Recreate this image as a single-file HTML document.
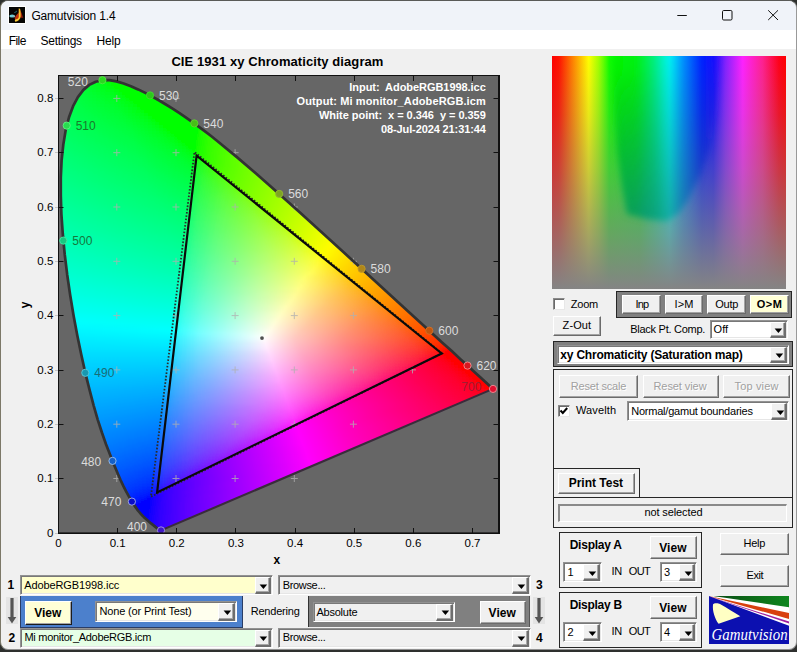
<!DOCTYPE html><html><head><meta charset="utf-8"><title>Gamutvision 1.4</title><style>
html,body{margin:0;padding:0}
body{width:797px;height:652px;background:#2e302e;position:relative;overflow:hidden;font-family:"Liberation Sans",Arial,sans-serif;font-size:11px}
#win{position:absolute;left:0;top:0;width:795px;height:648px;border:1px solid;border-color:#5a5a58 #999 #8f8f8f #7c7868;border-radius:8px;background:#f0f0f0;overflow:hidden}
#win div,#win span.t,#win svg{position:absolute}
span.t{white-space:nowrap;display:block}
.btn{border-top:1px solid #fff;border-left:1px solid #fff;border-right:1px solid #6b6b6b;border-bottom:1px solid #6b6b6b;box-shadow:inset -1px -1px 0 #a3a3a3}
.dd{border:1px solid;border-color:#929292 #fff #fff #929292;box-shadow:inset 1px 1px 0 #787878, inset -1px -1px 0 #e6e6e6}
.ab{background:#f0f0f0;border-style:solid;border-width:1px 2px 2px 1px;border-color:#fff #6e6e6e #6e6e6e #fff;box-shadow:inset -1px -1px 0 #a6a6a6}
.frame{border:1px solid #262626;box-sizing:border-box}
.dk{border-right-color:#1c1c1c;border-bottom-color:#1c1c1c}
.dis span.t{text-shadow:1px 1px 0 #fff}
.sunk{border-style:solid;border-width:2px 1px 1px 2px;border-color:#8a8a8a #fff #fff #8a8a8a;box-sizing:border-box}
.cb{background:#fff;border:1px solid;border-color:#8a8a8a #e8e8e8 #e8e8e8 #8a8a8a;box-shadow:inset 1px 1px 0 #6a6a6a;box-sizing:border-box}
</style></head><body><div id="win">
<div style="left:0px;top:0px;width:795px;height:29px;background:#f0f3f9;"></div>
<div style="left:0px;top:29px;width:795px;height:19px;background:#fff;"></div>
<svg style="left:7px;top:5px" width="18" height="18" viewBox="-1 -1 18 18"><rect x="-1" y="-1" width="18" height="18" fill="#fff"/><rect width="16" height="16" fill="#050505"/><ellipse cx="3.1" cy="8.9" rx="2.8" ry="1.5" fill="#6cccd6"/><ellipse cx="5.3" cy="9.4" rx="1" ry=".9" fill="#a9a4aa"/><path d="M4.8 5.7 L6.6 4.6 L8 3.4 L7.7 5 L5.6 6 Z" fill="#1f6872"/><path d="M5.6 11.8 L7 8.6 L9.8 5.5 L10 12 L7 12.8 Z" fill="#c2300c"/><path d="M11.3 2.6 L12.6 6 L14.4 11.2 L13 10.4 L11.6 11.8 Z" fill="#86140a"/><path d="M11.4 3 L12.2 6.5 L12.4 9.6 L11.5 10.5 Z" fill="#d8480e"/><path d="M9.7 1.4 L11.1 1.7 C11.8 5 11.9 8 11.6 10 C11 12.6 9 14.6 6.4 14.8 C5.5 14 5.8 12.6 6.4 12.2 C8 12.6 9.3 11.6 9.7 10 Z" fill="#f5b92a"/><path d="M10.3 4 C10.8 6.5 10.9 8.5 10.6 10 C10.2 11.8 8.6 13.6 6.6 13.9 C6.3 13.4 6.5 13 6.9 12.9 C8.6 12.9 9.9 11.8 10.2 10 Z" fill="#fde04a"/></svg>
<span class="t" style="left:30.4px;top:6.6px;font-size:12px;line-height:16px;letter-spacing:-0.181px;color:#000;">Gamutvision 1.4</span>
<svg style="left:669px;top:4px" width="120" height="20" viewBox="0 0 120 20" fill="none" stroke="#111" stroke-width="1"><path d="M7.3 10.5 H16.8"/><rect x="52.5" y="5.5" width="9.5" height="9.5" rx="1.2"/><path d="M98.2 5.3 L108 15 M108 5.3 L98.2 15"/></svg>
<span class="t" style="left:7.8px;top:31.8px;font-size:12px;line-height:16px;letter-spacing:-0.584px;color:#000;">File</span>
<span class="t" style="left:39.6px;top:31.8px;font-size:12px;line-height:16px;letter-spacing:-0.270px;color:#000;">Settings</span>
<span class="t" style="left:95.6px;top:31.8px;font-size:12px;line-height:16px;letter-spacing:-0.220px;color:#000;">Help</span>
<span class="t" style="left:170.4px;top:52px;font-size:13px;line-height:17px;letter-spacing:0.080px;color:#000;font-weight:bold;">CIE 1931 xy Chromaticity diagram</span>
<span class="t" style="left:272.6px;top:552px;font-size:12px;line-height:14px;font-weight:bold">x</span>
<span class="t" style="left:19.5px;top:297px;font-size:12px;line-height:14px;font-weight:bold;transform:rotate(-90deg);transform-origin:center;width:8px;text-align:center">y</span>
<span class="t" style="left:54.302px;top:535.05px;font-size:11.5px;line-height:15.5px;letter-spacing:-0.000px;color:#000;">0</span>
<span class="t" style="left:108.647px;top:535.05px;font-size:11.5px;line-height:15.5px;letter-spacing:0.000px;color:#000;">0.1</span>
<span class="t" style="left:167.787px;top:535.05px;font-size:11.5px;line-height:15.5px;letter-spacing:-0.000px;color:#000;">0.2</span>
<span class="t" style="left:226.927px;top:535.05px;font-size:11.5px;line-height:15.5px;letter-spacing:-0.000px;color:#000;">0.3</span>
<span class="t" style="left:286.067px;top:535.05px;font-size:11.5px;line-height:15.5px;letter-spacing:-0.000px;color:#000;">0.4</span>
<span class="t" style="left:345.207px;top:535.05px;font-size:11.5px;line-height:15.5px;letter-spacing:-0.000px;color:#000;">0.5</span>
<span class="t" style="left:404.347px;top:535.05px;font-size:11.5px;line-height:15.5px;letter-spacing:-0.000px;color:#000;">0.6</span>
<span class="t" style="left:463.487px;top:535.05px;font-size:11.5px;line-height:15.5px;letter-spacing:-0.000px;color:#000;">0.7</span>
<span class="t" style="left:45.904px;top:524.55px;font-size:11.5px;line-height:15.5px;letter-spacing:-0.000px;color:#000;">0</span>
<div style="left:53.5px;top:531.5px;width:3.5px;height:1px;background:#c4c4c4;"></div>
<span class="t" style="left:36.3132px;top:470.25px;font-size:11.5px;line-height:15.5px;letter-spacing:-0.000px;color:#000;">0.1</span>
<div style="left:53.5px;top:477.2px;width:3.5px;height:1px;background:#c4c4c4;"></div>
<span class="t" style="left:36.3132px;top:415.95px;font-size:11.5px;line-height:15.5px;letter-spacing:-0.000px;color:#000;">0.2</span>
<div style="left:53.5px;top:422.9px;width:3.5px;height:1px;background:#c4c4c4;"></div>
<span class="t" style="left:36.3132px;top:361.65px;font-size:11.5px;line-height:15.5px;letter-spacing:-0.000px;color:#000;">0.3</span>
<div style="left:53.5px;top:368.6px;width:3.5px;height:1px;background:#c4c4c4;"></div>
<span class="t" style="left:36.3132px;top:307.35px;font-size:11.5px;line-height:15.5px;letter-spacing:-0.000px;color:#000;">0.4</span>
<div style="left:53.5px;top:314.3px;width:3.5px;height:1px;background:#c4c4c4;"></div>
<span class="t" style="left:36.3132px;top:253.05px;font-size:11.5px;line-height:15.5px;letter-spacing:-0.000px;color:#000;">0.5</span>
<div style="left:53.5px;top:260px;width:3.5px;height:1px;background:#c4c4c4;"></div>
<span class="t" style="left:36.3132px;top:198.75px;font-size:11.5px;line-height:15.5px;letter-spacing:-0.000px;color:#000;">0.6</span>
<div style="left:53.5px;top:205.7px;width:3.5px;height:1px;background:#c4c4c4;"></div>
<span class="t" style="left:36.3132px;top:144.45px;font-size:11.5px;line-height:15.5px;letter-spacing:-0.000px;color:#000;">0.7</span>
<div style="left:53.5px;top:151.4px;width:3.5px;height:1px;background:#c4c4c4;"></div>
<span class="t" style="left:36.3132px;top:90.15px;font-size:11.5px;line-height:15.5px;letter-spacing:-0.000px;color:#000;">0.8</span>
<div style="left:53.5px;top:97.1px;width:3.5px;height:1px;background:#c4c4c4;"></div>
<svg style="left:57px;top:74px" width="442" height="459" viewBox="58 75 442 459"><defs><linearGradient id="g0" gradientUnits="userSpaceOnUse" x1="91.7" x2="123.3" y1="0" y2="0"><stop offset="0" stop-color="#00ff23"/><stop offset="0.437" stop-color="#00ff0d"/><stop offset="0.531" stop-color="#0f0"/><stop offset="1" stop-color="#0f0"/></linearGradient><linearGradient id="g1" gradientUnits="userSpaceOnUse" x1="86.6" x2="131.7" y1="0" y2="0"><stop offset="0" stop-color="#00ff2d"/><stop offset="0.435" stop-color="#00ff14"/><stop offset="0.543" stop-color="#00ff06"/><stop offset="0.609" stop-color="#0f0"/><stop offset="1" stop-color="#0f0"/></linearGradient><linearGradient id="g2" gradientUnits="userSpaceOnUse" x1="83.0" x2="138.6" y1="0" y2="0"><stop offset="0" stop-color="#0f3"/><stop offset="0.446" stop-color="#00ff18"/><stop offset="0.571" stop-color="#00ff06"/><stop offset="0.625" stop-color="#0f0"/><stop offset="1" stop-color="#0f0"/></linearGradient><linearGradient id="g3" gradientUnits="userSpaceOnUse" x1="80.3" x2="144.9" y1="0" y2="0"><stop offset="0" stop-color="#00ff38"/><stop offset="0.446" stop-color="#00ff1c"/><stop offset="0.585" stop-color="#00ff08"/><stop offset="0.631" stop-color="#0f0"/><stop offset="1" stop-color="#0f0"/></linearGradient><linearGradient id="g4" gradientUnits="userSpaceOnUse" x1="78.0" x2="150.7" y1="0" y2="0"><stop offset="0" stop-color="#00ff3d"/><stop offset="0.452" stop-color="#00ff1f"/><stop offset="0.589" stop-color="#00ff0c"/><stop offset="0.63" stop-color="#0f0"/><stop offset="1" stop-color="#0f0"/></linearGradient><linearGradient id="g5" gradientUnits="userSpaceOnUse" x1="75.9" x2="156.2" y1="0" y2="0"><stop offset="0" stop-color="#00ff41"/><stop offset="0.444" stop-color="#00ff23"/><stop offset="0.593" stop-color="#00ff0f"/><stop offset="0.63" stop-color="#0f0"/><stop offset="1" stop-color="#0f0"/></linearGradient><linearGradient id="g6" gradientUnits="userSpaceOnUse" x1="74.4" x2="161.6" y1="0" y2="0"><stop offset="0" stop-color="#00ff45"/><stop offset="0.443" stop-color="#00ff26"/><stop offset="0.602" stop-color="#00ff10"/><stop offset="0.648" stop-color="#0f0"/><stop offset="1" stop-color="#0f0"/></linearGradient><linearGradient id="g7" gradientUnits="userSpaceOnUse" x1="72.8" x2="166.6" y1="0" y2="0"><stop offset="0" stop-color="#00ff48"/><stop offset="0.447" stop-color="#00ff28"/><stop offset="0.606" stop-color="#00ff12"/><stop offset="0.638" stop-color="#00ff09"/><stop offset="0.67" stop-color="#0f0"/><stop offset="1" stop-color="#0f0"/></linearGradient><linearGradient id="g8" gradientUnits="userSpaceOnUse" x1="71.3" x2="171.5" y1="0" y2="0"><stop offset="0" stop-color="#00ff4b"/><stop offset="0.446" stop-color="#00ff2b"/><stop offset="0.614" stop-color="#00ff13"/><stop offset="0.653" stop-color="#00ff07"/><stop offset="0.683" stop-color="#0f0"/><stop offset="1" stop-color="#0f0"/></linearGradient><linearGradient id="g9" gradientUnits="userSpaceOnUse" x1="70.2" x2="176.2" y1="0" y2="0"><stop offset="0" stop-color="#00ff4e"/><stop offset="0.439" stop-color="#00ff2e"/><stop offset="0.617" stop-color="#00ff15"/><stop offset="0.664" stop-color="#00ff06"/><stop offset="0.692" stop-color="#0f0"/><stop offset="1" stop-color="#0f0"/></linearGradient><linearGradient id="g10" gradientUnits="userSpaceOnUse" x1="69.1" x2="180.8" y1="0" y2="0"><stop offset="0" stop-color="#00ff51"/><stop offset="0.446" stop-color="#00ff30"/><stop offset="0.625" stop-color="#00ff16"/><stop offset="0.67" stop-color="#00ff08"/><stop offset="0.696" stop-color="#0f0"/><stop offset="1" stop-color="#0f0"/></linearGradient><linearGradient id="g11" gradientUnits="userSpaceOnUse" x1="68.0" x2="185.3" y1="0" y2="0"><stop offset="0" stop-color="#00ff54"/><stop offset="0.441" stop-color="#0f3"/><stop offset="0.627" stop-color="#00ff18"/><stop offset="0.678" stop-color="#00ff09"/><stop offset="0.703" stop-color="#0f0"/><stop offset="1" stop-color="#0f0"/></linearGradient><linearGradient id="g12" gradientUnits="userSpaceOnUse" x1="67.1" x2="189.6" y1="0" y2="0"><stop offset="0" stop-color="#00ff57"/><stop offset="0.439" stop-color="#00ff35"/><stop offset="0.634" stop-color="#00ff19"/><stop offset="0.683" stop-color="#00ff0b"/><stop offset="0.707" stop-color="#0f0"/><stop offset="1" stop-color="#0f0"/></linearGradient><linearGradient id="g13" gradientUnits="userSpaceOnUse" x1="66.3" x2="193.8" y1="0" y2="0"><stop offset="0" stop-color="#00ff5a"/><stop offset="0.437" stop-color="#00ff38"/><stop offset="0.633" stop-color="#00ff1c"/><stop offset="0.695" stop-color="#00ff08"/><stop offset="0.719" stop-color="#0f0"/><stop offset="1" stop-color="#0f0"/></linearGradient><linearGradient id="g14" gradientUnits="userSpaceOnUse" x1="65.5" x2="197.9" y1="0" y2="0"><stop offset="0" stop-color="#00ff5d"/><stop offset="0.444" stop-color="#00ff39"/><stop offset="0.639" stop-color="#00ff1d"/><stop offset="0.699" stop-color="#00ff0b"/><stop offset="0.722" stop-color="#0f0"/><stop offset="1" stop-color="#0f0"/></linearGradient><linearGradient id="g15" gradientUnits="userSpaceOnUse" x1="64.8" x2="202.0" y1="0" y2="0"><stop offset="0" stop-color="#00ff5f"/><stop offset="0.442" stop-color="#00ff3c"/><stop offset="0.645" stop-color="#00ff1e"/><stop offset="0.703" stop-color="#00ff0d"/><stop offset="0.725" stop-color="#0f0"/><stop offset="0.964" stop-color="#0f0"/><stop offset="0.993" stop-color="#17ff00"/><stop offset="1" stop-color="#1aff00"/></linearGradient><linearGradient id="g16" gradientUnits="userSpaceOnUse" x1="64.1" x2="206.0" y1="0" y2="0"><stop offset="0" stop-color="#00ff62"/><stop offset="0.437" stop-color="#00ff3f"/><stop offset="0.641" stop-color="#00ff21"/><stop offset="0.711" stop-color="#00ff0d"/><stop offset="0.732" stop-color="#0f0"/><stop offset="0.937" stop-color="#0f0"/><stop offset="0.958" stop-color="#14ff00"/><stop offset="1" stop-color="#27ff00"/></linearGradient><linearGradient id="g17" gradientUnits="userSpaceOnUse" x1="63.6" x2="209.9" y1="0" y2="0"><stop offset="0" stop-color="#00ff64"/><stop offset="0.442" stop-color="#00ff40"/><stop offset="0.646" stop-color="#0f2"/><stop offset="0.714" stop-color="#00ff0f"/><stop offset="0.735" stop-color="#0f0"/><stop offset="0.912" stop-color="#0f0"/><stop offset="0.932" stop-color="#16ff00"/><stop offset="1" stop-color="#31ff00"/></linearGradient><linearGradient id="g18" gradientUnits="userSpaceOnUse" x1="63.0" x2="213.8" y1="0" y2="0"><stop offset="0" stop-color="#0f6"/><stop offset="0.437" stop-color="#00ff43"/><stop offset="0.649" stop-color="#00ff24"/><stop offset="0.722" stop-color="#00ff0f"/><stop offset="0.742" stop-color="#0f0"/><stop offset="0.881" stop-color="#0f0"/><stop offset="0.901" stop-color="#12ff00"/><stop offset="0.96" stop-color="#2dff00"/><stop offset="1" stop-color="#39ff00"/></linearGradient><linearGradient id="g19" gradientUnits="userSpaceOnUse" x1="62.5" x2="217.6" y1="0" y2="0"><stop offset="0" stop-color="#00ff69"/><stop offset="0.436" stop-color="#00ff45"/><stop offset="0.647" stop-color="#00ff27"/><stop offset="0.724" stop-color="#0f1"/><stop offset="0.75" stop-color="#0f0"/><stop offset="0.859" stop-color="#0f0"/><stop offset="0.878" stop-color="#14ff00"/><stop offset="0.936" stop-color="#2eff00"/><stop offset="1" stop-color="#40ff00"/></linearGradient><linearGradient id="g20" gradientUnits="userSpaceOnUse" x1="62.0" x2="221.2" y1="0" y2="0"><stop offset="0" stop-color="#00ff6b"/><stop offset="0.438" stop-color="#00ff47"/><stop offset="0.656" stop-color="#00ff27"/><stop offset="0.731" stop-color="#0f1"/><stop offset="0.756" stop-color="#0f0"/><stop offset="0.838" stop-color="#0f0"/><stop offset="0.856" stop-color="#14ff00"/><stop offset="0.913" stop-color="#2eff00"/><stop offset="1" stop-color="#47ff00"/></linearGradient><linearGradient id="g21" gradientUnits="userSpaceOnUse" x1="61.6" x2="224.9" y1="0" y2="0"><stop offset="0" stop-color="#00ff6e"/><stop offset="0.439" stop-color="#00ff49"/><stop offset="0.659" stop-color="#00ff29"/><stop offset="0.738" stop-color="#00ff12"/><stop offset="0.762" stop-color="#0f0"/><stop offset="0.817" stop-color="#0f0"/><stop offset="0.835" stop-color="#14ff00"/><stop offset="0.89" stop-color="#2eff00"/><stop offset="1" stop-color="#4eff00"/></linearGradient><linearGradient id="g22" gradientUnits="userSpaceOnUse" x1="61.3" x2="228.5" y1="0" y2="0"><stop offset="0" stop-color="#00ff70"/><stop offset="0.435" stop-color="#00ff4c"/><stop offset="0.655" stop-color="#00ff2b"/><stop offset="0.738" stop-color="#00ff15"/><stop offset="0.762" stop-color="#00ff05"/><stop offset="0.78" stop-color="#0f0"/><stop offset="0.798" stop-color="#0f0"/><stop offset="0.815" stop-color="#15ff00"/><stop offset="0.875" stop-color="#31ff00"/><stop offset="1" stop-color="#54ff00"/></linearGradient><linearGradient id="g23" gradientUnits="userSpaceOnUse" x1="61.0" x2="232.2" y1="0" y2="0"><stop offset="0" stop-color="#00ff72"/><stop offset="0.436" stop-color="#00ff4d"/><stop offset="0.657" stop-color="#00ff2d"/><stop offset="0.744" stop-color="#00ff15"/><stop offset="0.767" stop-color="#00ff06"/><stop offset="0.785" stop-color="#09ff00"/><stop offset="0.808" stop-color="#1dff00"/><stop offset="0.89" stop-color="#3dff00"/><stop offset="1" stop-color="#5aff00"/></linearGradient><linearGradient id="g24" gradientUnits="userSpaceOnUse" x1="60.7" x2="235.8" y1="0" y2="0"><stop offset="0" stop-color="#00ff74"/><stop offset="0.432" stop-color="#00ff50"/><stop offset="0.659" stop-color="#00ff2f"/><stop offset="0.75" stop-color="#00ff15"/><stop offset="0.767" stop-color="#0aff0b"/><stop offset="0.784" stop-color="#19ff00"/><stop offset="0.852" stop-color="#38ff00"/><stop offset="1" stop-color="#5fff00"/></linearGradient><linearGradient id="g25" gradientUnits="userSpaceOnUse" x1="60.4" x2="239.4" y1="0" y2="0"><stop offset="0" stop-color="#0f7"/><stop offset="0.433" stop-color="#00ff52"/><stop offset="0.661" stop-color="#00ff30"/><stop offset="0.744" stop-color="#00ff1a"/><stop offset="0.761" stop-color="#16ff13"/><stop offset="0.778" stop-color="#20ff06"/><stop offset="0.794" stop-color="#29ff00"/><stop offset="0.911" stop-color="#4fff00"/><stop offset="1" stop-color="#65ff00"/></linearGradient><linearGradient id="g26" gradientUnits="userSpaceOnUse" x1="60.1" x2="242.9" y1="0" y2="0"><stop offset="0" stop-color="#00ff79"/><stop offset="0.432" stop-color="#00ff54"/><stop offset="0.661" stop-color="#00ff32"/><stop offset="0.727" stop-color="#0f2"/><stop offset="0.743" stop-color="#14ff1d"/><stop offset="0.781" stop-color="#2bff09"/><stop offset="0.798" stop-color="#32ff00"/><stop offset="0.94" stop-color="#5cff00"/><stop offset="1" stop-color="#6aff00"/></linearGradient><linearGradient id="g27" gradientUnits="userSpaceOnUse" x1="60.0" x2="246.4" y1="0" y2="0"><stop offset="0" stop-color="#00ff7b"/><stop offset="0.428" stop-color="#00ff57"/><stop offset="0.658" stop-color="#00ff35"/><stop offset="0.711" stop-color="#00ff29"/><stop offset="0.727" stop-color="#14ff24"/><stop offset="0.775" stop-color="#2fff11"/><stop offset="0.791" stop-color="#36ff00"/><stop offset="0.947" stop-color="#63ff00"/><stop offset="1" stop-color="#70ff00"/></linearGradient><linearGradient id="g28" gradientUnits="userSpaceOnUse" x1="59.8" x2="249.9" y1="0" y2="0"><stop offset="0" stop-color="#00ff7d"/><stop offset="0.429" stop-color="#00ff58"/><stop offset="0.66" stop-color="#00ff36"/><stop offset="0.696" stop-color="#00ff2e"/><stop offset="0.712" stop-color="#14ff2b"/><stop offset="0.759" stop-color="#30ff1c"/><stop offset="0.791" stop-color="#3cff0a"/><stop offset="0.806" stop-color="#41ff00"/><stop offset="1" stop-color="#75ff00"/></linearGradient><linearGradient id="g29" gradientUnits="userSpaceOnUse" x1="59.7" x2="253.4" y1="0" y2="0"><stop offset="0" stop-color="#00ff7f"/><stop offset="0.428" stop-color="#00ff5b"/><stop offset="0.66" stop-color="#00ff38"/><stop offset="0.686" stop-color="#0f3"/><stop offset="0.701" stop-color="#18ff2f"/><stop offset="0.753" stop-color="#34ff21"/><stop offset="0.794" stop-color="#43ff0c"/><stop offset="0.809" stop-color="#48ff00"/><stop offset="1" stop-color="#7aff00"/></linearGradient><linearGradient id="g30" gradientUnits="userSpaceOnUse" x1="59.5" x2="256.9" y1="0" y2="0"><stop offset="0" stop-color="#00ff82"/><stop offset="0.424" stop-color="#00ff5d"/><stop offset="0.662" stop-color="#00ff3a"/><stop offset="0.677" stop-color="#0dff37"/><stop offset="0.702" stop-color="#22ff31"/><stop offset="0.783" stop-color="#45ff16"/><stop offset="0.803" stop-color="#4cff07"/><stop offset="0.818" stop-color="#50ff00"/><stop offset="1" stop-color="#7fff00"/></linearGradient><linearGradient id="g31" gradientUnits="userSpaceOnUse" x1="59.4" x2="260.4" y1="0" y2="0"><stop offset="0" stop-color="#00ff84"/><stop offset="0.428" stop-color="#00ff5f"/><stop offset="0.657" stop-color="#00ff3d"/><stop offset="0.672" stop-color="#16ff3a"/><stop offset="0.716" stop-color="#31ff2f"/><stop offset="0.786" stop-color="#4cff17"/><stop offset="0.806" stop-color="#52ff09"/><stop offset="0.821" stop-color="#56ff00"/><stop offset="1" stop-color="#84ff00"/></linearGradient><linearGradient id="g32" gradientUnits="userSpaceOnUse" x1="59.3" x2="263.8" y1="0" y2="0"><stop offset="0" stop-color="#00ff86"/><stop offset="0.424" stop-color="#00ff61"/><stop offset="0.644" stop-color="#00ff41"/><stop offset="0.659" stop-color="#16ff3e"/><stop offset="0.702" stop-color="#31ff35"/><stop offset="0.785" stop-color="#51ff1b"/><stop offset="0.81" stop-color="#58ff0b"/><stop offset="0.824" stop-color="#5cff00"/><stop offset="1" stop-color="#89ff00"/></linearGradient><linearGradient id="g33" gradientUnits="userSpaceOnUse" x1="59.3" x2="267.2" y1="0" y2="0"><stop offset="0" stop-color="#0f8"/><stop offset="0.423" stop-color="#00ff63"/><stop offset="0.63" stop-color="#00ff46"/><stop offset="0.649" stop-color="#19ff42"/><stop offset="0.702" stop-color="#37ff37"/><stop offset="0.788" stop-color="#57ff1c"/><stop offset="0.813" stop-color="#5eff0c"/><stop offset="0.827" stop-color="#62ff00"/><stop offset="1" stop-color="#8eff00"/></linearGradient><linearGradient id="g34" gradientUnits="userSpaceOnUse" x1="59.3" x2="270.6" y1="0" y2="0"><stop offset="0" stop-color="#00ff8a"/><stop offset="0.42" stop-color="#0f6"/><stop offset="0.618" stop-color="#00ff4a"/><stop offset="0.637" stop-color="#19ff46"/><stop offset="0.689" stop-color="#38ff3c"/><stop offset="0.788" stop-color="#5bff1e"/><stop offset="0.816" stop-color="#64ff0d"/><stop offset="0.83" stop-color="#68ff00"/><stop offset="1" stop-color="#93ff00"/></linearGradient><linearGradient id="g35" gradientUnits="userSpaceOnUse" x1="59.3" x2="274.0" y1="0" y2="0"><stop offset="0" stop-color="#00ff8c"/><stop offset="0.419" stop-color="#00ff68"/><stop offset="0.609" stop-color="#00ff4d"/><stop offset="0.623" stop-color="#18ff4b"/><stop offset="0.67" stop-color="#35ff42"/><stop offset="0.781" stop-color="#5eff23"/><stop offset="0.819" stop-color="#6aff0f"/><stop offset="0.833" stop-color="#6dff00"/><stop offset="1" stop-color="#9f0"/></linearGradient><linearGradient id="g36" gradientUnits="userSpaceOnUse" x1="59.3" x2="277.4" y1="0" y2="0"><stop offset="0" stop-color="#00ff8f"/><stop offset="0.42" stop-color="#00ff6a"/><stop offset="0.598" stop-color="#00ff51"/><stop offset="0.612" stop-color="#18ff4f"/><stop offset="0.658" stop-color="#35ff46"/><stop offset="0.776" stop-color="#62ff27"/><stop offset="0.822" stop-color="#6fff10"/><stop offset="0.836" stop-color="#73ff00"/><stop offset="1" stop-color="#9eff00"/></linearGradient><linearGradient id="g37" gradientUnits="userSpaceOnUse" x1="59.3" x2="280.8" y1="0" y2="0"><stop offset="0" stop-color="#00ff91"/><stop offset="0.419" stop-color="#00ff6c"/><stop offset="0.586" stop-color="#0f5"/><stop offset="0.599" stop-color="#16ff53"/><stop offset="0.64" stop-color="#32ff4c"/><stop offset="0.748" stop-color="#5dff33"/><stop offset="0.815" stop-color="#72ff18"/><stop offset="0.833" stop-color="#77ff07"/><stop offset="0.847" stop-color="#7bff00"/><stop offset="1" stop-color="#a3ff00"/></linearGradient><linearGradient id="g38" gradientUnits="userSpaceOnUse" x1="59.3" x2="284.1" y1="0" y2="0"><stop offset="0" stop-color="#00ff93"/><stop offset="0.418" stop-color="#00ff6e"/><stop offset="0.573" stop-color="#00ff59"/><stop offset="0.587" stop-color="#14ff57"/><stop offset="0.622" stop-color="#2fff51"/><stop offset="0.72" stop-color="#59ff3c"/><stop offset="0.804" stop-color="#74ff20"/><stop offset="0.831" stop-color="#7bff0f"/><stop offset="0.844" stop-color="#7fff00"/><stop offset="1" stop-color="#a8ff00"/></linearGradient><linearGradient id="g39" gradientUnits="userSpaceOnUse" x1="59.3" x2="287.4" y1="0" y2="0"><stop offset="0" stop-color="#00ff95"/><stop offset="0.415" stop-color="#00ff71"/><stop offset="0.563" stop-color="#00ff5d"/><stop offset="0.576" stop-color="#15ff5b"/><stop offset="0.611" stop-color="#30ff55"/><stop offset="0.707" stop-color="#59ff42"/><stop offset="0.803" stop-color="#78ff23"/><stop offset="0.834" stop-color="#81ff10"/><stop offset="0.847" stop-color="#85ff00"/><stop offset="1" stop-color="#adff00"/></linearGradient><linearGradient id="g40" gradientUnits="userSpaceOnUse" x1="59.4" x2="290.8" y1="0" y2="0"><stop offset="0" stop-color="#00ff97"/><stop offset="0.414" stop-color="#00ff73"/><stop offset="0.556" stop-color="#00ff60"/><stop offset="0.569" stop-color="#18ff5e"/><stop offset="0.608" stop-color="#34ff58"/><stop offset="0.711" stop-color="#5fff43"/><stop offset="0.806" stop-color="#7eff24"/><stop offset="0.841" stop-color="#88ff0e"/><stop offset="0.853" stop-color="#8bff00"/><stop offset="1" stop-color="#b3ff00"/></linearGradient><linearGradient id="g41" gradientUnits="userSpaceOnUse" x1="59.5" x2="294.1" y1="0" y2="0"><stop offset="0" stop-color="#0f9"/><stop offset="0.413" stop-color="#00ff75"/><stop offset="0.545" stop-color="#00ff64"/><stop offset="0.557" stop-color="#16ff62"/><stop offset="0.596" stop-color="#33ff5c"/><stop offset="0.694" stop-color="#5eff49"/><stop offset="0.8" stop-color="#80ff29"/><stop offset="0.838" stop-color="#8cff14"/><stop offset="0.851" stop-color="#8fff00"/><stop offset="1" stop-color="#b8ff00"/></linearGradient><linearGradient id="g42" gradientUnits="userSpaceOnUse" x1="59.6" x2="297.4" y1="0" y2="0"><stop offset="0" stop-color="#00ff9c"/><stop offset="0.412" stop-color="#0f7"/><stop offset="0.538" stop-color="#00ff67"/><stop offset="0.55" stop-color="#19ff65"/><stop offset="0.592" stop-color="#37ff5e"/><stop offset="0.702" stop-color="#65ff49"/><stop offset="0.807" stop-color="#87ff29"/><stop offset="0.845" stop-color="#92ff12"/><stop offset="0.857" stop-color="#96ff00"/><stop offset="1" stop-color="#bdff00"/></linearGradient><linearGradient id="g43" gradientUnits="userSpaceOnUse" x1="59.7" x2="300.8" y1="0" y2="0"><stop offset="0" stop-color="#00ff9e"/><stop offset="0.409" stop-color="#00ff7a"/><stop offset="0.529" stop-color="#02ff6a"/><stop offset="0.541" stop-color="#1aff69"/><stop offset="0.583" stop-color="#38ff62"/><stop offset="0.69" stop-color="#66ff4e"/><stop offset="0.802" stop-color="#8aff2d"/><stop offset="0.843" stop-color="#97ff16"/><stop offset="0.855" stop-color="#9aff08"/><stop offset="0.868" stop-color="#9eff00"/><stop offset="1" stop-color="#c3ff00"/></linearGradient><linearGradient id="g44" gradientUnits="userSpaceOnUse" x1="59.8" x2="304.1" y1="0" y2="0"><stop offset="0" stop-color="#00ffa0"/><stop offset="0.408" stop-color="#00ff7c"/><stop offset="0.518" stop-color="#00ff6e"/><stop offset="0.531" stop-color="#18ff6c"/><stop offset="0.567" stop-color="#35ff67"/><stop offset="0.665" stop-color="#61ff55"/><stop offset="0.792" stop-color="#8cff33"/><stop offset="0.845" stop-color="#9cff18"/><stop offset="0.857" stop-color="#a0ff0b"/><stop offset="0.869" stop-color="#a3ff00"/><stop offset="1" stop-color="#c9ff00"/></linearGradient><linearGradient id="g45" gradientUnits="userSpaceOnUse" x1="60.0" x2="307.4" y1="0" y2="0"><stop offset="0" stop-color="#00ffa2"/><stop offset="0.407" stop-color="#00ff7f"/><stop offset="0.508" stop-color="#00ff72"/><stop offset="0.52" stop-color="#16ff70"/><stop offset="0.552" stop-color="#32ff6b"/><stop offset="0.641" stop-color="#5dff5c"/><stop offset="0.778" stop-color="#8dff3a"/><stop offset="0.839" stop-color="#9fff1f"/><stop offset="0.859" stop-color="#a5ff0e"/><stop offset="0.871" stop-color="#a9ff00"/><stop offset="1" stop-color="#ceff00"/></linearGradient><linearGradient id="g46" gradientUnits="userSpaceOnUse" x1="60.2" x2="310.7" y1="0" y2="0"><stop offset="0" stop-color="#00ffa4"/><stop offset="0.406" stop-color="#00ff81"/><stop offset="0.502" stop-color="#00ff75"/><stop offset="0.514" stop-color="#19ff73"/><stop offset="0.554" stop-color="#38ff6d"/><stop offset="0.653" stop-color="#66ff5c"/><stop offset="0.785" stop-color="#93ff3a"/><stop offset="0.845" stop-color="#a6ff1e"/><stop offset="0.865" stop-color="#acff0a"/><stop offset="0.876" stop-color="#b0ff00"/><stop offset="1" stop-color="#d4ff00"/></linearGradient><linearGradient id="g47" gradientUnits="userSpaceOnUse" x1="60.4" x2="314.0" y1="0" y2="0"><stop offset="0" stop-color="#00ffa7"/><stop offset="0.406" stop-color="#00ff83"/><stop offset="0.492" stop-color="#00ff78"/><stop offset="0.504" stop-color="#18ff77"/><stop offset="0.539" stop-color="#36ff72"/><stop offset="0.63" stop-color="#62ff62"/><stop offset="0.776" stop-color="#95ff3f"/><stop offset="0.843" stop-color="#af2"/><stop offset="0.866" stop-color="#b2ff0d"/><stop offset="0.878" stop-color="#b5ff00"/><stop offset="1" stop-color="#daff00"/></linearGradient><linearGradient id="g48" gradientUnits="userSpaceOnUse" x1="60.6" x2="317.3" y1="0" y2="0"><stop offset="0" stop-color="#00ffa9"/><stop offset="0.405" stop-color="#00ff86"/><stop offset="0.482" stop-color="#00ff7c"/><stop offset="0.494" stop-color="#16ff7a"/><stop offset="0.525" stop-color="#32ff76"/><stop offset="0.607" stop-color="#5dff69"/><stop offset="0.763" stop-color="#96ff45"/><stop offset="0.84" stop-color="#afff25"/><stop offset="0.868" stop-color="#b7ff0f"/><stop offset="0.879" stop-color="#bf0"/><stop offset="1" stop-color="#e0ff00"/></linearGradient><linearGradient id="g49" gradientUnits="userSpaceOnUse" x1="60.8" x2="320.7" y1="0" y2="0"><stop offset="0" stop-color="#00ffab"/><stop offset="0.404" stop-color="#0f8"/><stop offset="0.477" stop-color="#00ff7f"/><stop offset="0.488" stop-color="#1aff7d"/><stop offset="0.523" stop-color="#37ff78"/><stop offset="0.612" stop-color="#63ff6a"/><stop offset="0.765" stop-color="#9cff46"/><stop offset="0.842" stop-color="#b5ff27"/><stop offset="0.869" stop-color="#bdff11"/><stop offset="0.881" stop-color="#c1ff00"/><stop offset="1" stop-color="#e7ff00"/></linearGradient><linearGradient id="g50" gradientUnits="userSpaceOnUse" x1="61.0" x2="324.0" y1="0" y2="0"><stop offset="0" stop-color="#00ffad"/><stop offset="0.403" stop-color="#00ff8a"/><stop offset="0.468" stop-color="#00ff82"/><stop offset="0.479" stop-color="#18ff81"/><stop offset="0.51" stop-color="#34ff7d"/><stop offset="0.589" stop-color="#5eff70"/><stop offset="0.753" stop-color="#9cff4c"/><stop offset="0.837" stop-color="#b8ff2c"/><stop offset="0.871" stop-color="#c3ff13"/><stop offset="0.882" stop-color="#c7ff00"/><stop offset="1" stop-color="#edff00"/></linearGradient><linearGradient id="g51" gradientUnits="userSpaceOnUse" x1="61.2" x2="327.2" y1="0" y2="0"><stop offset="0" stop-color="#00ffb0"/><stop offset="0.401" stop-color="#00ff8d"/><stop offset="0.461" stop-color="#00ff86"/><stop offset="0.472" stop-color="#19ff84"/><stop offset="0.506" stop-color="#37ff80"/><stop offset="0.592" stop-color="#64ff72"/><stop offset="0.757" stop-color="#a2ff4d"/><stop offset="0.839" stop-color="#beff2d"/><stop offset="0.873" stop-color="#c9ff15"/><stop offset="0.884" stop-color="#cdff00"/><stop offset="1" stop-color="#f4ff00"/></linearGradient><linearGradient id="g52" gradientUnits="userSpaceOnUse" x1="61.5" x2="330.5" y1="0" y2="0"><stop offset="0" stop-color="#00ffb2"/><stop offset="0.4" stop-color="#00ff90"/><stop offset="0.452" stop-color="#00ff89"/><stop offset="0.463" stop-color="#17ff88"/><stop offset="0.493" stop-color="#34ff84"/><stop offset="0.57" stop-color="#5fff78"/><stop offset="0.744" stop-color="#a3ff53"/><stop offset="0.833" stop-color="#c2ff33"/><stop offset="0.87" stop-color="#ceff1b"/><stop offset="0.881" stop-color="#d2ff0d"/><stop offset="0.893" stop-color="#d6ff00"/><stop offset="1" stop-color="#faff00"/></linearGradient><linearGradient id="g53" gradientUnits="userSpaceOnUse" x1="61.7" x2="333.8" y1="0" y2="0"><stop offset="0" stop-color="#00ffb4"/><stop offset="0.399" stop-color="#00ff92"/><stop offset="0.447" stop-color="#00ff8c"/><stop offset="0.458" stop-color="#1bff8b"/><stop offset="0.491" stop-color="#39ff86"/><stop offset="0.575" stop-color="#66ff7a"/><stop offset="0.744" stop-color="#a8ff56"/><stop offset="0.835" stop-color="#c8ff34"/><stop offset="0.875" stop-color="#d6ff19"/><stop offset="0.886" stop-color="#daff08"/><stop offset="0.897" stop-color="#df0"/><stop offset="1" stop-color="#fffd00"/></linearGradient><linearGradient id="g54" gradientUnits="userSpaceOnUse" x1="62.0" x2="337.1" y1="0" y2="0"><stop offset="0" stop-color="#00ffb7"/><stop offset="0.399" stop-color="#00ff95"/><stop offset="0.438" stop-color="#00ff90"/><stop offset="0.449" stop-color="#19ff8e"/><stop offset="0.482" stop-color="#38ff8a"/><stop offset="0.565" stop-color="#66ff7e"/><stop offset="0.739" stop-color="#abff59"/><stop offset="0.833" stop-color="#cdff37"/><stop offset="0.873" stop-color="#dbff1e"/><stop offset="0.888" stop-color="#e0ff0c"/><stop offset="0.899" stop-color="#e4ff00"/><stop offset="0.982" stop-color="#fffc00"/><stop offset="1" stop-color="#fff600"/></linearGradient><linearGradient id="g55" gradientUnits="userSpaceOnUse" x1="62.3" x2="340.4" y1="0" y2="0"><stop offset="0" stop-color="#00ffb9"/><stop offset="0.394" stop-color="#00ff98"/><stop offset="0.43" stop-color="#00ff93"/><stop offset="0.441" stop-color="#18ff92"/><stop offset="0.47" stop-color="#35ff8e"/><stop offset="0.545" stop-color="#61ff84"/><stop offset="0.728" stop-color="#acff5f"/><stop offset="0.828" stop-color="#d1ff3c"/><stop offset="0.875" stop-color="#e2ff20"/><stop offset="0.889" stop-color="#e7ff0f"/><stop offset="0.9" stop-color="#ebff00"/><stop offset="0.961" stop-color="#fffd00"/><stop offset="1" stop-color="#ffef00"/></linearGradient><linearGradient id="g56" gradientUnits="userSpaceOnUse" x1="62.6" x2="343.7" y1="0" y2="0"><stop offset="0" stop-color="#0fb"/><stop offset="0.394" stop-color="#00ff9a"/><stop offset="0.426" stop-color="#00ff96"/><stop offset="0.436" stop-color="#1cff95"/><stop offset="0.468" stop-color="#3aff91"/><stop offset="0.55" stop-color="#68ff85"/><stop offset="0.73" stop-color="#b2ff60"/><stop offset="0.83" stop-color="#d7ff3e"/><stop offset="0.876" stop-color="#e8ff22"/><stop offset="0.89" stop-color="#ef1"/><stop offset="0.901" stop-color="#f2ff00"/><stop offset="0.943" stop-color="#fffc00"/><stop offset="1" stop-color="#ffe900"/></linearGradient><linearGradient id="g57" gradientUnits="userSpaceOnUse" x1="62.9" x2="347.0" y1="0" y2="0"><stop offset="0" stop-color="#00ffbe"/><stop offset="0.393" stop-color="#00ff9d"/><stop offset="0.418" stop-color="#00ff9a"/><stop offset="0.428" stop-color="#1aff99"/><stop offset="0.46" stop-color="#39ff95"/><stop offset="0.54" stop-color="#68ff89"/><stop offset="0.723" stop-color="#b5ff65"/><stop offset="0.828" stop-color="#ddff41"/><stop offset="0.877" stop-color="#efff23"/><stop offset="0.895" stop-color="#f6ff0e"/><stop offset="0.905" stop-color="#faff00"/><stop offset="0.933" stop-color="#fff900"/><stop offset="1" stop-color="#ffe200"/></linearGradient><linearGradient id="g58" gradientUnits="userSpaceOnUse" x1="63.2" x2="350.2" y1="0" y2="0"><stop offset="0" stop-color="#00ffc0"/><stop offset="0.392" stop-color="#00ff9f"/><stop offset="0.41" stop-color="#00ff9d"/><stop offset="0.42" stop-color="#18ff9c"/><stop offset="0.448" stop-color="#36ff99"/><stop offset="0.521" stop-color="#63ff8f"/><stop offset="0.698" stop-color="#b0ff6e"/><stop offset="0.812" stop-color="#ddff4a"/><stop offset="0.872" stop-color="#f4ff2b"/><stop offset="0.892" stop-color="#fcff16"/><stop offset="0.903" stop-color="#fffe00"/><stop offset="1" stop-color="#ffdc00"/></linearGradient><linearGradient id="g59" gradientUnits="userSpaceOnUse" x1="63.6" x2="353.5" y1="0" y2="0"><stop offset="0" stop-color="#00ffc3"/><stop offset="0.393" stop-color="#00ffa2"/><stop offset="0.403" stop-color="#00ffa1"/><stop offset="0.414" stop-color="#19ffa0"/><stop offset="0.441" stop-color="#37ff9c"/><stop offset="0.514" stop-color="#64ff93"/><stop offset="0.69" stop-color="#b2ff72"/><stop offset="0.81" stop-color="#e2ff4e"/><stop offset="0.872" stop-color="#fbff2d"/><stop offset="0.897" stop-color="#fff914"/><stop offset="0.907" stop-color="#fff500"/><stop offset="1" stop-color="#ffd600"/></linearGradient><linearGradient id="g60" gradientUnits="userSpaceOnUse" x1="63.9" x2="356.8" y1="0" y2="0"><stop offset="0" stop-color="#00ffc5"/><stop offset="0.392" stop-color="#00ffa5"/><stop offset="0.403" stop-color="#11ffa4"/><stop offset="0.42" stop-color="#2affa2"/><stop offset="0.468" stop-color="#4fff9c"/><stop offset="0.584" stop-color="#8aff8a"/><stop offset="0.747" stop-color="#cfff66"/><stop offset="0.84" stop-color="#f5ff43"/><stop offset="0.87" stop-color="#fffd31"/><stop offset="0.898" stop-color="#fff216"/><stop offset="0.908" stop-color="#fe0"/><stop offset="1" stop-color="#ffd000"/></linearGradient><linearGradient id="g61" gradientUnits="userSpaceOnUse" x1="64.3" x2="360.1" y1="0" y2="0"><stop offset="0" stop-color="#00ffc8"/><stop offset="0.392" stop-color="#00ffa8"/><stop offset="0.402" stop-color="#1cffa6"/><stop offset="0.432" stop-color="#3bffa3"/><stop offset="0.507" stop-color="#6aff99"/><stop offset="0.696" stop-color="#c0ff76"/><stop offset="0.814" stop-color="#f1ff51"/><stop offset="0.855" stop-color="#fffc3d"/><stop offset="0.895" stop-color="#ffec1b"/><stop offset="0.905" stop-color="#ffe90b"/><stop offset="0.916" stop-color="#ffe500"/><stop offset="1" stop-color="#ffca00"/></linearGradient><linearGradient id="g62" gradientUnits="userSpaceOnUse" x1="64.6" x2="363.3" y1="0" y2="0"><stop offset="0" stop-color="#00ffca"/><stop offset="0.385" stop-color="#00ffab"/><stop offset="0.395" stop-color="#1bffaa"/><stop offset="0.421" stop-color="#38ffa7"/><stop offset="0.492" stop-color="#67ff9e"/><stop offset="0.666" stop-color="#b8ff80"/><stop offset="0.796" stop-color="#f0ff5b"/><stop offset="0.836" stop-color="#fffd4a"/><stop offset="0.89" stop-color="#ffe823"/><stop offset="0.906" stop-color="#ffe20e"/><stop offset="0.916" stop-color="#ffde00"/><stop offset="1" stop-color="#ffc400"/></linearGradient><linearGradient id="g63" gradientUnits="userSpaceOnUse" x1="65.0" x2="366.6" y1="0" y2="0"><stop offset="0" stop-color="#00ffcd"/><stop offset="0.377" stop-color="#00ffaf"/><stop offset="0.387" stop-color="#19ffae"/><stop offset="0.414" stop-color="#38ffab"/><stop offset="0.48" stop-color="#65ffa3"/><stop offset="0.642" stop-color="#b4ff88"/><stop offset="0.781" stop-color="#f0ff63"/><stop offset="0.821" stop-color="#fffc53"/><stop offset="0.887" stop-color="#ffe227"/><stop offset="0.907" stop-color="#ffdb11"/><stop offset="0.917" stop-color="#ffd800"/><stop offset="1" stop-color="#ffbe00"/></linearGradient><linearGradient id="g64" gradientUnits="userSpaceOnUse" x1="65.4" x2="369.9" y1="0" y2="0"><stop offset="0" stop-color="#00ffcf"/><stop offset="0.374" stop-color="#03ffb2"/><stop offset="0.384" stop-color="#1dffb1"/><stop offset="0.413" stop-color="#3dffae"/><stop offset="0.485" stop-color="#6dffa5"/><stop offset="0.675" stop-color="#c8ff84"/><stop offset="0.8" stop-color="#ffff5f"/><stop offset="0.885" stop-color="#ffdc2a"/><stop offset="0.908" stop-color="#ffd412"/><stop offset="0.918" stop-color="#ffd100"/><stop offset="1" stop-color="#ffb800"/></linearGradient><linearGradient id="g65" gradientUnits="userSpaceOnUse" x1="65.7" x2="373.2" y1="0" y2="0"><stop offset="0" stop-color="#00ffd2"/><stop offset="0.367" stop-color="#00ffb6"/><stop offset="0.377" stop-color="#1cffb5"/><stop offset="0.403" stop-color="#3affb2"/><stop offset="0.471" stop-color="#69ffaa"/><stop offset="0.643" stop-color="#bfff8e"/><stop offset="0.779" stop-color="#fdff6a"/><stop offset="0.88" stop-color="#ffd830"/><stop offset="0.909" stop-color="#ffce14"/><stop offset="0.919" stop-color="#ffcb00"/><stop offset="1" stop-color="#ffb200"/></linearGradient><linearGradient id="g66" gradientUnits="userSpaceOnUse" x1="66.2" x2="376.4" y1="0" y2="0"><stop offset="0" stop-color="#00ffd5"/><stop offset="0.36" stop-color="#00ffba"/><stop offset="0.37" stop-color="#1bffb9"/><stop offset="0.395" stop-color="#3affb6"/><stop offset="0.46" stop-color="#68ffae"/><stop offset="0.621" stop-color="#baff96"/><stop offset="0.765" stop-color="#feff72"/><stop offset="0.881" stop-color="#ffd130"/><stop offset="0.91" stop-color="#ffc816"/><stop offset="0.92" stop-color="#ffc400"/><stop offset="1" stop-color="#ffad00"/></linearGradient><linearGradient id="g67" gradientUnits="userSpaceOnUse" x1="66.6" x2="379.7" y1="0" y2="0"><stop offset="0" stop-color="#00ffd7"/><stop offset="0.354" stop-color="#00ffbd"/><stop offset="0.363" stop-color="#1affbc"/><stop offset="0.385" stop-color="#36ffba"/><stop offset="0.443" stop-color="#62ffb4"/><stop offset="0.583" stop-color="#adffa0"/><stop offset="0.742" stop-color="#faff7c"/><stop offset="0.764" stop-color="#fffa73"/><stop offset="0.885" stop-color="#ffca2e"/><stop offset="0.914" stop-color="#ffc013"/><stop offset="0.924" stop-color="#ffbd00"/><stop offset="1" stop-color="#ffa700"/></linearGradient><linearGradient id="g68" gradientUnits="userSpaceOnUse" x1="67.0" x2="383.0" y1="0" y2="0"><stop offset="0" stop-color="#00ffda"/><stop offset="0.348" stop-color="#00ffc1"/><stop offset="0.358" stop-color="#1bffc0"/><stop offset="0.383" stop-color="#3affbd"/><stop offset="0.446" stop-color="#69ffb6"/><stop offset="0.604" stop-color="#beff9f"/><stop offset="0.741" stop-color="#fffe7f"/><stop offset="0.87" stop-color="#ffc939"/><stop offset="0.911" stop-color="#ffbb18"/><stop offset="0.921" stop-color="#ffb80a"/><stop offset="0.93" stop-color="#ffb500"/><stop offset="1" stop-color="#ffa200"/></linearGradient><linearGradient id="g69" gradientUnits="userSpaceOnUse" x1="67.5" x2="386.3" y1="0" y2="0"><stop offset="0" stop-color="#0fd"/><stop offset="0.342" stop-color="#00ffc5"/><stop offset="0.351" stop-color="#19ffc4"/><stop offset="0.373" stop-color="#37ffc2"/><stop offset="0.429" stop-color="#64ffbc"/><stop offset="0.567" stop-color="#b1ffa9"/><stop offset="0.724" stop-color="#ff8"/><stop offset="0.853" stop-color="#ffc944"/><stop offset="0.906" stop-color="#ffb720"/><stop offset="0.922" stop-color="#ffb20c"/><stop offset="0.931" stop-color="#ffaf00"/><stop offset="1" stop-color="#ff9c00"/></linearGradient><linearGradient id="g70" gradientUnits="userSpaceOnUse" x1="67.9" x2="389.6" y1="0" y2="0"><stop offset="0" stop-color="#00ffe0"/><stop offset="0.339" stop-color="#00ffc8"/><stop offset="0.348" stop-color="#1effc7"/><stop offset="0.373" stop-color="#3dffc5"/><stop offset="0.435" stop-color="#6cffbe"/><stop offset="0.596" stop-color="#c5ffa8"/><stop offset="0.714" stop-color="#fffc8d"/><stop offset="0.842" stop-color="#ffc64b"/><stop offset="0.907" stop-color="#ffb121"/><stop offset="0.922" stop-color="#ffac0e"/><stop offset="0.932" stop-color="#ffa900"/><stop offset="1" stop-color="#ff9600"/></linearGradient><linearGradient id="g71" gradientUnits="userSpaceOnUse" x1="68.3" x2="392.9" y1="0" y2="0"><stop offset="0" stop-color="#00ffe2"/><stop offset="0.332" stop-color="#0fc"/><stop offset="0.342" stop-color="#1dffcb"/><stop offset="0.366" stop-color="#3dffc9"/><stop offset="0.428" stop-color="#6cffc3"/><stop offset="0.588" stop-color="#c7ffad"/><stop offset="0.698" stop-color="#fffd95"/><stop offset="0.822" stop-color="#ffc756"/><stop offset="0.902" stop-color="#ffad26"/><stop offset="0.923" stop-color="#ffa610"/><stop offset="0.932" stop-color="#ffa400"/><stop offset="1" stop-color="#ff9100"/></linearGradient><linearGradient id="g72" gradientUnits="userSpaceOnUse" x1="68.8" x2="396.2" y1="0" y2="0"><stop offset="0" stop-color="#00ffe5"/><stop offset="0.326" stop-color="#00ffd0"/><stop offset="0.335" stop-color="#1cffcf"/><stop offset="0.357" stop-color="#39ffcd"/><stop offset="0.412" stop-color="#67ffc8"/><stop offset="0.549" stop-color="#b8ffb7"/><stop offset="0.686" stop-color="#fffc9c"/><stop offset="0.808" stop-color="#ffc65d"/><stop offset="0.899" stop-color="#ffa829"/><stop offset="0.924" stop-color="#ffa012"/><stop offset="0.933" stop-color="#ff9e00"/><stop offset="1" stop-color="#ff8b00"/></linearGradient><linearGradient id="g73" gradientUnits="userSpaceOnUse" x1="69.3" x2="399.5" y1="0" y2="0"><stop offset="0" stop-color="#00ffe8"/><stop offset="0.32" stop-color="#00ffd4"/><stop offset="0.329" stop-color="#1bffd3"/><stop offset="0.35" stop-color="#39ffd1"/><stop offset="0.405" stop-color="#67ffcc"/><stop offset="0.541" stop-color="#b9ffbc"/><stop offset="0.671" stop-color="#fffda4"/><stop offset="0.789" stop-color="#ffc766"/><stop offset="0.897" stop-color="#ffa22c"/><stop offset="0.924" stop-color="#ff9a13"/><stop offset="0.934" stop-color="#ff9800"/><stop offset="1" stop-color="#ff8600"/></linearGradient><linearGradient id="g74" gradientUnits="userSpaceOnUse" x1="69.8" x2="402.7" y1="0" y2="0"><stop offset="0" stop-color="#00ffeb"/><stop offset="0.315" stop-color="#00ffd8"/><stop offset="0.324" stop-color="#1cffd7"/><stop offset="0.345" stop-color="#3affd6"/><stop offset="0.399" stop-color="#68ffd1"/><stop offset="0.535" stop-color="#bcffc1"/><stop offset="0.658" stop-color="#fffdaa"/><stop offset="0.772" stop-color="#ffc86f"/><stop offset="0.895" stop-color="#ff9d2e"/><stop offset="0.925" stop-color="#ff9515"/><stop offset="0.934" stop-color="#ff9201"/><stop offset="1" stop-color="#ff8000"/></linearGradient><linearGradient id="g75" gradientUnits="userSpaceOnUse" x1="70.3" x2="406.0" y1="0" y2="0"><stop offset="0" stop-color="#0fe"/><stop offset="0.31" stop-color="#00ffdc"/><stop offset="0.318" stop-color="#1bffdb"/><stop offset="0.339" stop-color="#3affda"/><stop offset="0.393" stop-color="#69ffd5"/><stop offset="0.527" stop-color="#bdffc6"/><stop offset="0.643" stop-color="#fffeb2"/><stop offset="0.753" stop-color="#ffc978"/><stop offset="0.896" stop-color="#ff972e"/><stop offset="0.929" stop-color="#ff8e12"/><stop offset="0.938" stop-color="#ff8b00"/><stop offset="1" stop-color="#ff7b00"/></linearGradient><linearGradient id="g76" gradientUnits="userSpaceOnUse" x1="70.8" x2="409.3" y1="0" y2="0"><stop offset="0" stop-color="#00fff1"/><stop offset="0.304" stop-color="#00ffe0"/><stop offset="0.313" stop-color="#1affe0"/><stop offset="0.33" stop-color="#36ffde"/><stop offset="0.378" stop-color="#63ffda"/><stop offset="0.493" stop-color="#afffcf"/><stop offset="0.631" stop-color="#fffdb9"/><stop offset="0.74" stop-color="#ffc77e"/><stop offset="0.894" stop-color="#ff9230"/><stop offset="0.929" stop-color="#ff8814"/><stop offset="0.938" stop-color="#ff8600"/><stop offset="1" stop-color="#ff7500"/></linearGradient><linearGradient id="g77" gradientUnits="userSpaceOnUse" x1="71.3" x2="412.5" y1="0" y2="0"><stop offset="0" stop-color="#00fff4"/><stop offset="0.301" stop-color="#00ffe4"/><stop offset="0.31" stop-color="#1fffe4"/><stop offset="0.333" stop-color="#40ffe2"/><stop offset="0.392" stop-color="#73ffdd"/><stop offset="0.556" stop-color="#dbffcb"/><stop offset="0.617" stop-color="#fffec0"/><stop offset="0.722" stop-color="#ffc986"/><stop offset="0.883" stop-color="#ff9038"/><stop offset="0.927" stop-color="#ff8318"/><stop offset="0.936" stop-color="#ff810c"/><stop offset="0.944" stop-color="#ff7e00"/><stop offset="1" stop-color="#ff6f00"/></linearGradient><linearGradient id="g78" gradientUnits="userSpaceOnUse" x1="71.8" x2="415.8" y1="0" y2="0"><stop offset="0" stop-color="#00fff8"/><stop offset="0.297" stop-color="#00ffe8"/><stop offset="0.305" stop-color="#20ffe8"/><stop offset="0.328" stop-color="#41ffe6"/><stop offset="0.387" stop-color="#74ffe2"/><stop offset="0.555" stop-color="#e1ffd0"/><stop offset="0.605" stop-color="#fffec7"/><stop offset="0.709" stop-color="#ffc88c"/><stop offset="0.866" stop-color="#ff8f41"/><stop offset="0.924" stop-color="#ff7e1c"/><stop offset="0.939" stop-color="#ff7a09"/><stop offset="0.948" stop-color="#ff7800"/><stop offset="1" stop-color="#ff6900"/></linearGradient><linearGradient id="g79" gradientUnits="userSpaceOnUse" x1="72.3" x2="419.1" y1="0" y2="0"><stop offset="0" stop-color="#00fffb"/><stop offset="0.291" stop-color="#00ffed"/><stop offset="0.3" stop-color="#20ffec"/><stop offset="0.323" stop-color="#41ffeb"/><stop offset="0.378" stop-color="#73ffe7"/><stop offset="0.533" stop-color="#dbffd7"/><stop offset="0.594" stop-color="#fffdcd"/><stop offset="0.695" stop-color="#ffc793"/><stop offset="0.847" stop-color="#ff8f4b"/><stop offset="0.919" stop-color="#ff7a22"/><stop offset="0.939" stop-color="#ff740b"/><stop offset="0.948" stop-color="#ff7200"/><stop offset="1" stop-color="#ff6300"/></linearGradient><linearGradient id="g80" gradientUnits="userSpaceOnUse" x1="72.9" x2="422.4" y1="0" y2="0"><stop offset="0" stop-color="#00fffe"/><stop offset="0.286" stop-color="#00fff1"/><stop offset="0.294" stop-color="#1ffff1"/><stop offset="0.314" stop-color="#3effef"/><stop offset="0.366" stop-color="#6fffec"/><stop offset="0.503" stop-color="#ceffe0"/><stop offset="0.58" stop-color="#fffed5"/><stop offset="0.677" stop-color="#ffc99c"/><stop offset="0.826" stop-color="#ff9056"/><stop offset="0.914" stop-color="#ff7526"/><stop offset="0.94" stop-color="#ff6e0d"/><stop offset="0.949" stop-color="#ff6c00"/><stop offset="1" stop-color="#ff5d00"/></linearGradient><linearGradient id="g81" gradientUnits="userSpaceOnUse" x1="73.4" x2="425.6" y1="0" y2="0"><stop offset="0" stop-color="#00fdff"/><stop offset="0.28" stop-color="#00fff6"/><stop offset="0.289" stop-color="#1ffff5"/><stop offset="0.309" stop-color="#3efff4"/><stop offset="0.36" stop-color="#70fff1"/><stop offset="0.496" stop-color="#d0ffe6"/><stop offset="0.569" stop-color="#fffddb"/><stop offset="0.666" stop-color="#ffc7a1"/><stop offset="0.813" stop-color="#ff8e5c"/><stop offset="0.912" stop-color="#ff7029"/><stop offset="0.941" stop-color="#ff680f"/><stop offset="0.949" stop-color="#ff6500"/><stop offset="1" stop-color="#ff5700"/></linearGradient><linearGradient id="g82" gradientUnits="userSpaceOnUse" x1="74.0" x2="428.9" y1="0" y2="0"><stop offset="0" stop-color="#00f9ff"/><stop offset="0.254" stop-color="#00fffb"/><stop offset="0.276" stop-color="#00fffa"/><stop offset="0.285" stop-color="#20fffa"/><stop offset="0.304" stop-color="#3ffff9"/><stop offset="0.355" stop-color="#71fff6"/><stop offset="0.493" stop-color="#d5ffeb"/><stop offset="0.558" stop-color="#fffce2"/><stop offset="0.651" stop-color="#ffc7a8"/><stop offset="0.794" stop-color="#ff8f64"/><stop offset="0.91" stop-color="#ff6b2b"/><stop offset="0.941" stop-color="#ff6211"/><stop offset="0.949" stop-color="#ff5f00"/><stop offset="1" stop-color="#ff5100"/></linearGradient><linearGradient id="g83" gradientUnits="userSpaceOnUse" x1="74.6" x2="432.2" y1="0" y2="0"><stop offset="0" stop-color="#00f6ff"/><stop offset="0.271" stop-color="#0ff"/><stop offset="0.279" stop-color="#1ffffe"/><stop offset="0.299" stop-color="#3ffffd"/><stop offset="0.346" stop-color="#70fffb"/><stop offset="0.475" stop-color="#d0fff2"/><stop offset="0.545" stop-color="#fffdea"/><stop offset="0.637" stop-color="#ffc7af"/><stop offset="0.777" stop-color="#ff8f6c"/><stop offset="0.908" stop-color="#ff652d"/><stop offset="0.941" stop-color="#ff5b12"/><stop offset="0.95" stop-color="#ff5900"/><stop offset="1" stop-color="#ff4a00"/></linearGradient><linearGradient id="g84" gradientUnits="userSpaceOnUse" x1="75.1" x2="435.5" y1="0" y2="0"><stop offset="0" stop-color="#00f3ff"/><stop offset="0.266" stop-color="#00fbff"/><stop offset="0.274" stop-color="#1efbff"/><stop offset="0.294" stop-color="#3ffcff"/><stop offset="0.343" stop-color="#73feff"/><stop offset="0.465" stop-color="#d0fff9"/><stop offset="0.532" stop-color="#fffef2"/><stop offset="0.62" stop-color="#ffc9b8"/><stop offset="0.756" stop-color="#ff9075"/><stop offset="0.906" stop-color="#ff5f2f"/><stop offset="0.942" stop-color="#ff5413"/><stop offset="0.95" stop-color="#ff5203"/><stop offset="0.967" stop-color="#ff4d00"/><stop offset="1" stop-color="#ff4200"/></linearGradient><linearGradient id="g85" gradientUnits="userSpaceOnUse" x1="75.7" x2="438.8" y1="0" y2="0"><stop offset="0" stop-color="#00f0ff"/><stop offset="0.261" stop-color="#00f6ff"/><stop offset="0.269" stop-color="#1df6ff"/><stop offset="0.288" stop-color="#3ef7ff"/><stop offset="0.338" stop-color="#71f9ff"/><stop offset="0.508" stop-color="#f7fffb"/><stop offset="0.522" stop-color="#fffdf8"/><stop offset="0.607" stop-color="#ffc8be"/><stop offset="0.739" stop-color="#ff907d"/><stop offset="0.907" stop-color="#ff592f"/><stop offset="0.942" stop-color="#ff4d14"/><stop offset="0.951" stop-color="#ff4b07"/><stop offset="0.959" stop-color="#ff4800"/><stop offset="1" stop-color="#ff3b00"/></linearGradient><linearGradient id="g86" gradientUnits="userSpaceOnUse" x1="76.3" x2="442.0" y1="0" y2="0"><stop offset="0" stop-color="#00ecff"/><stop offset="0.257" stop-color="#00f2ff"/><stop offset="0.265" stop-color="#1ef2ff"/><stop offset="0.284" stop-color="#3ef2ff"/><stop offset="0.333" stop-color="#71f4ff"/><stop offset="0.514" stop-color="#fffbfd"/><stop offset="0.598" stop-color="#ffc6c3"/><stop offset="0.73" stop-color="#ff8d81"/><stop offset="0.907" stop-color="#ff522f"/><stop offset="0.943" stop-color="#ff4615"/><stop offset="0.951" stop-color="#ff430a"/><stop offset="0.959" stop-color="#ff4100"/><stop offset="1" stop-color="#ff3200"/></linearGradient><linearGradient id="g87" gradientUnits="userSpaceOnUse" x1="76.9" x2="445.3" y1="0" y2="0"><stop offset="0" stop-color="#00e9ff"/><stop offset="0.252" stop-color="#00edff"/><stop offset="0.26" stop-color="#1dedff"/><stop offset="0.279" stop-color="#3deeff"/><stop offset="0.328" stop-color="#6fefff"/><stop offset="0.512" stop-color="#fff3fc"/><stop offset="0.596" stop-color="#ffc0c3"/><stop offset="0.732" stop-color="#ff867f"/><stop offset="0.908" stop-color="#ff4a30"/><stop offset="0.946" stop-color="#ff3d13"/><stop offset="0.957" stop-color="#ff3900"/><stop offset="1" stop-color="#ff2800"/></linearGradient><linearGradient id="g88" gradientUnits="userSpaceOnUse" x1="77.6" x2="448.6" y1="0" y2="0"><stop offset="0" stop-color="#00e6ff"/><stop offset="0.247" stop-color="#00e9ff"/><stop offset="0.255" stop-color="#1de9ff"/><stop offset="0.274" stop-color="#3ce9ff"/><stop offset="0.323" stop-color="#6eeaff"/><stop offset="0.508" stop-color="#ffeefe"/><stop offset="0.594" stop-color="#ffbac3"/><stop offset="0.731" stop-color="#ff7f7f"/><stop offset="0.909" stop-color="#ff4230"/><stop offset="0.946" stop-color="#ff3414"/><stop offset="0.954" stop-color="#ff3108"/><stop offset="0.962" stop-color="#ff2e00"/><stop offset="1" stop-color="#ff1c00"/></linearGradient><linearGradient id="g89" gradientUnits="userSpaceOnUse" x1="78.2" x2="451.9" y1="0" y2="0"><stop offset="0" stop-color="#00e3ff"/><stop offset="0.243" stop-color="#00e4ff"/><stop offset="0.251" stop-color="#1de5ff"/><stop offset="0.27" stop-color="#3ce5ff"/><stop offset="0.318" stop-color="#6ee5ff"/><stop offset="0.505" stop-color="#ffe8fe"/><stop offset="0.591" stop-color="#ffb4c4"/><stop offset="0.727" stop-color="#ff7a81"/><stop offset="0.909" stop-color="#ff3a30"/><stop offset="0.947" stop-color="#ff2a15"/><stop offset="0.955" stop-color="#ff270a"/><stop offset="0.963" stop-color="#ff2300"/><stop offset="0.995" stop-color="#ff0c00"/><stop offset="0.997" stop-color="#ff0800"/><stop offset="1" stop-color="#f00"/></linearGradient><linearGradient id="g90" gradientUnits="userSpaceOnUse" x1="78.8" x2="455.2" y1="0" y2="0"><stop offset="0" stop-color="#00e0ff"/><stop offset="0.239" stop-color="#00e0ff"/><stop offset="0.247" stop-color="#1de0ff"/><stop offset="0.265" stop-color="#3be0ff"/><stop offset="0.313" stop-color="#6ce1ff"/><stop offset="0.504" stop-color="#ffe0fd"/><stop offset="0.592" stop-color="#ffadc3"/><stop offset="0.732" stop-color="#ff727f"/><stop offset="0.91" stop-color="#ff3030"/><stop offset="0.95" stop-color="#ff1d13"/><stop offset="0.958" stop-color="#ff1707"/><stop offset="0.966" stop-color="#f10"/><stop offset="0.976" stop-color="#f00"/><stop offset="1" stop-color="#f00"/></linearGradient><linearGradient id="g91" gradientUnits="userSpaceOnUse" x1="79.4" x2="458.5" y1="0" y2="0"><stop offset="0" stop-color="#00dcff"/><stop offset="0.234" stop-color="#00dcff"/><stop offset="0.242" stop-color="#1cdcff"/><stop offset="0.261" stop-color="#3bdcff"/><stop offset="0.308" stop-color="#6bdcff"/><stop offset="0.503" stop-color="#ffd9fd"/><stop offset="0.589" stop-color="#ffa7c3"/><stop offset="0.732" stop-color="#ff6c7f"/><stop offset="0.908" stop-color="#ff2732"/><stop offset="0.942" stop-color="#ff101c"/><stop offset="0.953" stop-color="#f01"/><stop offset="0.961" stop-color="#f00"/><stop offset="1" stop-color="#f00"/></linearGradient><linearGradient id="g92" gradientUnits="userSpaceOnUse" x1="80.1" x2="461.8" y1="0" y2="0"><stop offset="0" stop-color="#00d9ff"/><stop offset="0.23" stop-color="#00d8ff"/><stop offset="0.238" stop-color="#1dd8ff"/><stop offset="0.259" stop-color="#3ed8ff"/><stop offset="0.312" stop-color="#71d7ff"/><stop offset="0.5" stop-color="#ffd3fd"/><stop offset="0.589" stop-color="#ffa0c2"/><stop offset="0.733" stop-color="#ff647e"/><stop offset="0.885" stop-color="#ff273e"/><stop offset="0.919" stop-color="#ff0f2c"/><stop offset="0.927" stop-color="#ff0027"/><stop offset="0.955" stop-color="#ff000f"/><stop offset="0.963" stop-color="#f00"/><stop offset="1" stop-color="#f00"/></linearGradient><linearGradient id="g93" gradientUnits="userSpaceOnUse" x1="80.7" x2="465.0" y1="0" y2="0"><stop offset="0" stop-color="#00d6ff"/><stop offset="0.226" stop-color="#00d4ff"/><stop offset="0.234" stop-color="#1cd4ff"/><stop offset="0.252" stop-color="#3ad4ff"/><stop offset="0.301" stop-color="#6cd3ff"/><stop offset="0.496" stop-color="#ffcefe"/><stop offset="0.584" stop-color="#ff9cc4"/><stop offset="0.727" stop-color="#ff5f80"/><stop offset="0.865" stop-color="#ff2547"/><stop offset="0.896" stop-color="#ff0e39"/><stop offset="0.904" stop-color="#ff0035"/><stop offset="0.951" stop-color="#ff0016"/><stop offset="0.961" stop-color="#ff0008"/><stop offset="0.969" stop-color="#f00"/><stop offset="1" stop-color="#f00"/></linearGradient><linearGradient id="g94" gradientUnits="userSpaceOnUse" x1="81.4" x2="468.3" y1="0" y2="0"><stop offset="0" stop-color="#00d3ff"/><stop offset="0.222" stop-color="#00d0ff"/><stop offset="0.23" stop-color="#1dd0ff"/><stop offset="0.251" stop-color="#3ecfff"/><stop offset="0.305" stop-color="#72ceff"/><stop offset="0.496" stop-color="#ffc6fd"/><stop offset="0.587" stop-color="#ff93c2"/><stop offset="0.734" stop-color="#ff557d"/><stop offset="0.848" stop-color="#ff224f"/><stop offset="0.873" stop-color="#ff0d44"/><stop offset="0.881" stop-color="#ff0040"/><stop offset="0.946" stop-color="#ff001c"/><stop offset="0.961" stop-color="#ff000a"/><stop offset="0.969" stop-color="#f00"/><stop offset="1" stop-color="#f00"/></linearGradient><linearGradient id="g95" gradientUnits="userSpaceOnUse" x1="82.1" x2="471.6" y1="0" y2="0"><stop offset="0" stop-color="#00d0ff"/><stop offset="0.218" stop-color="#0cf"/><stop offset="0.226" stop-color="#1dccff"/><stop offset="0.246" stop-color="#3dcbff"/><stop offset="0.3" stop-color="#71caff"/><stop offset="0.492" stop-color="#ffc0fe"/><stop offset="0.582" stop-color="#ff8ec4"/><stop offset="0.726" stop-color="#ff5180"/><stop offset="0.826" stop-color="#ff2258"/><stop offset="0.851" stop-color="#ff0c4d"/><stop offset="0.859" stop-color="#ff004a"/><stop offset="0.938" stop-color="#f02"/><stop offset="0.962" stop-color="#ff000c"/><stop offset="0.969" stop-color="#f00"/><stop offset="1" stop-color="#f00"/></linearGradient><linearGradient id="g96" gradientUnits="userSpaceOnUse" x1="82.8" x2="474.9" y1="0" y2="0"><stop offset="0" stop-color="#00cdff"/><stop offset="0.214" stop-color="#00c8ff"/><stop offset="0.221" stop-color="#1dc8ff"/><stop offset="0.242" stop-color="#3dc7ff"/><stop offset="0.295" stop-color="#70c5ff"/><stop offset="0.491" stop-color="#ffb9fd"/><stop offset="0.583" stop-color="#ff87c3"/><stop offset="0.73" stop-color="#ff477e"/><stop offset="0.809" stop-color="#ff1e5f"/><stop offset="0.83" stop-color="#ff0a56"/><stop offset="0.837" stop-color="#ff0053"/><stop offset="0.934" stop-color="#ff0025"/><stop offset="0.962" stop-color="#ff000d"/><stop offset="0.969" stop-color="#f00"/><stop offset="1" stop-color="#f00"/></linearGradient><linearGradient id="g97" gradientUnits="userSpaceOnUse" x1="83.4" x2="478.2" y1="0" y2="0"><stop offset="0" stop-color="#00caff"/><stop offset="0.21" stop-color="#00c4ff"/><stop offset="0.218" stop-color="#1dc4ff"/><stop offset="0.238" stop-color="#3dc3ff"/><stop offset="0.291" stop-color="#6fc1ff"/><stop offset="0.489" stop-color="#ffb3fd"/><stop offset="0.58" stop-color="#ff81c3"/><stop offset="0.727" stop-color="#ff3f80"/><stop offset="0.792" stop-color="#ff1a65"/><stop offset="0.808" stop-color="#ff095f"/><stop offset="0.815" stop-color="#ff005c"/><stop offset="0.929" stop-color="#ff0029"/><stop offset="0.962" stop-color="#ff000f"/><stop offset="0.97" stop-color="#f00"/><stop offset="1" stop-color="#f00"/></linearGradient><linearGradient id="g98" gradientUnits="userSpaceOnUse" x1="84.1" x2="481.4" y1="0" y2="0"><stop offset="0" stop-color="#00c7ff"/><stop offset="0.206" stop-color="#00c0ff"/><stop offset="0.214" stop-color="#1dc0ff"/><stop offset="0.234" stop-color="#3cbfff"/><stop offset="0.286" stop-color="#6fbcff"/><stop offset="0.487" stop-color="#ffabfd"/><stop offset="0.58" stop-color="#ff79c2"/><stop offset="0.731" stop-color="#ff337e"/><stop offset="0.776" stop-color="#ff156c"/><stop offset="0.786" stop-color="#ff0768"/><stop offset="0.794" stop-color="#ff0065"/><stop offset="0.927" stop-color="#ff002b"/><stop offset="0.962" stop-color="#ff0010"/><stop offset="0.97" stop-color="#f00"/><stop offset="1" stop-color="#f00"/></linearGradient><linearGradient id="g99" gradientUnits="userSpaceOnUse" x1="84.9" x2="484.7" y1="0" y2="0"><stop offset="0" stop-color="#00c4ff"/><stop offset="0.2" stop-color="#00bcff"/><stop offset="0.207" stop-color="#18bcff"/><stop offset="0.225" stop-color="#36bbff"/><stop offset="0.27" stop-color="#64b9ff"/><stop offset="0.422" stop-color="#d3adff"/><stop offset="0.485" stop-color="#ffa5fd"/><stop offset="0.577" stop-color="#ff73c3"/><stop offset="0.728" stop-color="#ff2a7f"/><stop offset="0.758" stop-color="#ff1273"/><stop offset="0.767" stop-color="#ff006f"/><stop offset="0.922" stop-color="#ff002e"/><stop offset="0.96" stop-color="#ff0014"/><stop offset="0.973" stop-color="#f00"/><stop offset="1" stop-color="#f00"/></linearGradient><linearGradient id="g100" gradientUnits="userSpaceOnUse" x1="85.6" x2="488.0" y1="0" y2="0"><stop offset="0" stop-color="#00c1ff"/><stop offset="0.196" stop-color="#00b9ff"/><stop offset="0.203" stop-color="#18b8ff"/><stop offset="0.221" stop-color="#36b7ff"/><stop offset="0.268" stop-color="#65b4ff"/><stop offset="0.479" stop-color="#fea0ff"/><stop offset="0.581" stop-color="#ff6ac1"/><stop offset="0.71" stop-color="#ff2886"/><stop offset="0.737" stop-color="#ff117b"/><stop offset="0.744" stop-color="#ff0078"/><stop offset="0.921" stop-color="#ff002f"/><stop offset="0.96" stop-color="#ff0015"/><stop offset="0.97" stop-color="#ff0007"/><stop offset="0.978" stop-color="#f00"/><stop offset="1" stop-color="#f00"/></linearGradient><linearGradient id="g101" gradientUnits="userSpaceOnUse" x1="86.3" x2="491.3" y1="0" y2="0"><stop offset="0" stop-color="#00beff"/><stop offset="0.193" stop-color="#00b5ff"/><stop offset="0.2" stop-color="#1ab4ff"/><stop offset="0.217" stop-color="#36b3ff"/><stop offset="0.264" stop-color="#65b0ff"/><stop offset="0.44" stop-color="#e39fff"/><stop offset="0.481" stop-color="#ff97fc"/><stop offset="0.575" stop-color="#ff64c3"/><stop offset="0.691" stop-color="#ff268d"/><stop offset="0.716" stop-color="#ff1083"/><stop offset="0.723" stop-color="#ff0080"/><stop offset="0.921" stop-color="#ff002f"/><stop offset="0.963" stop-color="#ff0013"/><stop offset="0.97" stop-color="#ff0009"/><stop offset="0.978" stop-color="#f00"/><stop offset="1" stop-color="#f00"/></linearGradient><linearGradient id="g102" gradientUnits="userSpaceOnUse" x1="87.1" x2="494.4" y1="0" y2="0"><stop offset="0" stop-color="#00baff"/><stop offset="0.189" stop-color="#00b1ff"/><stop offset="0.196" stop-color="#19b1ff"/><stop offset="0.213" stop-color="#36afff"/><stop offset="0.26" stop-color="#64acff"/><stop offset="0.419" stop-color="#d69bff"/><stop offset="0.478" stop-color="#ff91fe"/><stop offset="0.574" stop-color="#ff5dc3"/><stop offset="0.674" stop-color="#ff2594"/><stop offset="0.696" stop-color="#ff0f8b"/><stop offset="0.703" stop-color="#f08"/><stop offset="0.922" stop-color="#ff0030"/><stop offset="0.963" stop-color="#ff0014"/><stop offset="0.973" stop-color="#ff0007"/><stop offset="0.98" stop-color="#f00"/><stop offset="1" stop-color="#f00"/></linearGradient><linearGradient id="g103" gradientUnits="userSpaceOnUse" x1="87.8" x2="494.4" y1="0" y2="0"><stop offset="0" stop-color="#00b7ff"/><stop offset="0.187" stop-color="#00adff"/><stop offset="0.194" stop-color="#1aadff"/><stop offset="0.214" stop-color="#39abff"/><stop offset="0.265" stop-color="#6aa7ff"/><stop offset="0.462" stop-color="#f38eff"/><stop offset="0.482" stop-color="#ff89fc"/><stop offset="0.58" stop-color="#ff53c1"/><stop offset="0.661" stop-color="#ff239c"/><stop offset="0.681" stop-color="#ff0f93"/><stop offset="0.688" stop-color="#ff0090"/><stop offset="0.929" stop-color="#ff0030"/><stop offset="0.973" stop-color="#ff0014"/><stop offset="0.985" stop-color="#f00"/><stop offset="1" stop-color="#f00"/></linearGradient><linearGradient id="g104" gradientUnits="userSpaceOnUse" x1="88.6" x2="487.3" y1="0" y2="0"><stop offset="0" stop-color="#00b4ff"/><stop offset="0.188" stop-color="#0af"/><stop offset="0.195" stop-color="#1ba9ff"/><stop offset="0.216" stop-color="#39a8ff"/><stop offset="0.268" stop-color="#69a3ff"/><stop offset="0.461" stop-color="#ec89ff"/><stop offset="0.491" stop-color="#ff82fd"/><stop offset="0.591" stop-color="#ff4cc2"/><stop offset="0.662" stop-color="#ff20a2"/><stop offset="0.679" stop-color="#ff0b9b"/><stop offset="0.687" stop-color="#ff0098"/><stop offset="0.955" stop-color="#ff0030"/><stop offset="1" stop-color="#ff0013"/></linearGradient><linearGradient id="g105" gradientUnits="userSpaceOnUse" x1="89.4" x2="480.3" y1="0" y2="0"><stop offset="0" stop-color="#00b1ff"/><stop offset="0.189" stop-color="#00a6ff"/><stop offset="0.197" stop-color="#1ca5ff"/><stop offset="0.22" stop-color="#3ca3ff"/><stop offset="0.279" stop-color="#6f9eff"/><stop offset="0.468" stop-color="#ea83ff"/><stop offset="0.501" stop-color="#ff7bfd"/><stop offset="0.604" stop-color="#ff43c3"/><stop offset="0.662" stop-color="#ff1ca8"/><stop offset="0.675" stop-color="#ff0ca3"/><stop offset="0.683" stop-color="#ff00a0"/><stop offset="0.982" stop-color="#ff002f"/><stop offset="1" stop-color="#ff0026"/></linearGradient><linearGradient id="g106" gradientUnits="userSpaceOnUse" x1="90.2" x2="473.2" y1="0" y2="0"><stop offset="0" stop-color="#00aeff"/><stop offset="0.19" stop-color="#00a2ff"/><stop offset="0.198" stop-color="#1ca2ff"/><stop offset="0.221" stop-color="#3ca0ff"/><stop offset="0.281" stop-color="#6e9aff"/><stop offset="0.469" stop-color="#e57eff"/><stop offset="0.513" stop-color="#ff73fd"/><stop offset="0.62" stop-color="#ff38c2"/><stop offset="0.661" stop-color="#ff19b0"/><stop offset="0.672" stop-color="#ff0aab"/><stop offset="0.68" stop-color="#ff00a8"/><stop offset="1" stop-color="#f03"/></linearGradient><linearGradient id="g107" gradientUnits="userSpaceOnUse" x1="91.0" x2="466.2" y1="0" y2="0"><stop offset="0" stop-color="#00abff"/><stop offset="0.189" stop-color="#009fff"/><stop offset="0.197" stop-color="#179eff"/><stop offset="0.215" stop-color="#339dff"/><stop offset="0.266" stop-color="#6098ff"/><stop offset="0.418" stop-color="#c084ff"/><stop offset="0.524" stop-color="#ff6bfd"/><stop offset="0.633" stop-color="#ff2dc3"/><stop offset="0.662" stop-color="#ff13b6"/><stop offset="0.67" stop-color="#ff00b3"/><stop offset="0.896" stop-color="#ff0062"/><stop offset="1" stop-color="#ff003e"/></linearGradient><linearGradient id="g108" gradientUnits="userSpaceOnUse" x1="91.8" x2="459.2" y1="0" y2="0"><stop offset="0" stop-color="#00a8ff"/><stop offset="0.19" stop-color="#009bff"/><stop offset="0.198" stop-color="#189aff"/><stop offset="0.22" stop-color="#3798ff"/><stop offset="0.277" stop-color="#6693ff"/><stop offset="0.465" stop-color="#d676ff"/><stop offset="0.535" stop-color="#ff63fe"/><stop offset="0.639" stop-color="#ff26c8"/><stop offset="0.66" stop-color="#ff10be"/><stop offset="0.668" stop-color="#f0b"/><stop offset="0.872" stop-color="#ff0072"/><stop offset="1" stop-color="#ff0048"/></linearGradient><linearGradient id="g109" gradientUnits="userSpaceOnUse" x1="92.6" x2="452.1" y1="0" y2="0"><stop offset="0" stop-color="#00a5ff"/><stop offset="0.192" stop-color="#0097ff"/><stop offset="0.2" stop-color="#1a97ff"/><stop offset="0.222" stop-color="#3795ff"/><stop offset="0.281" stop-color="#658fff"/><stop offset="0.467" stop-color="#d171ff"/><stop offset="0.547" stop-color="#ff5bfe"/><stop offset="0.636" stop-color="#ff24d0"/><stop offset="0.656" stop-color="#ff10c7"/><stop offset="0.664" stop-color="#ff00c4"/><stop offset="0.853" stop-color="#ff007f"/><stop offset="1" stop-color="#ff0051"/></linearGradient><linearGradient id="g110" gradientUnits="userSpaceOnUse" x1="93.5" x2="445.1" y1="0" y2="0"><stop offset="0" stop-color="#00a2ff"/><stop offset="0.193" stop-color="#0094ff"/><stop offset="0.202" stop-color="#1b93ff"/><stop offset="0.227" stop-color="#3a90ff"/><stop offset="0.293" stop-color="#6b89ff"/><stop offset="0.472" stop-color="#cf6cff"/><stop offset="0.562" stop-color="#ff50fd"/><stop offset="0.634" stop-color="#ff23d8"/><stop offset="0.653" stop-color="#ff0bcf"/><stop offset="0.662" stop-color="#f0c"/><stop offset="0.841" stop-color="#ff008a"/><stop offset="1" stop-color="#ff005a"/></linearGradient><linearGradient id="g111" gradientUnits="userSpaceOnUse" x1="94.3" x2="438.0" y1="0" y2="0"><stop offset="0" stop-color="#009fff"/><stop offset="0.192" stop-color="#0090ff"/><stop offset="0.201" stop-color="#178fff"/><stop offset="0.221" stop-color="#328eff"/><stop offset="0.276" stop-color="#5e88ff"/><stop offset="0.433" stop-color="#b570ff"/><stop offset="0.552" stop-color="#f450ff"/><stop offset="0.578" stop-color="#ff45fb"/><stop offset="0.634" stop-color="#ff1ee0"/><stop offset="0.648" stop-color="#ff0bd9"/><stop offset="0.657" stop-color="#ff00d5"/><stop offset="0.828" stop-color="#ff0096"/><stop offset="1" stop-color="#ff0062"/></linearGradient><linearGradient id="g112" gradientUnits="userSpaceOnUse" x1="95.2" x2="431.0" y1="0" y2="0"><stop offset="0" stop-color="#009bff"/><stop offset="0.193" stop-color="#008dff"/><stop offset="0.202" stop-color="#188cff"/><stop offset="0.226" stop-color="#3689ff"/><stop offset="0.289" stop-color="#6382ff"/><stop offset="0.47" stop-color="#c364ff"/><stop offset="0.571" stop-color="#f744ff"/><stop offset="0.592" stop-color="#ff3afc"/><stop offset="0.634" stop-color="#ff19e7"/><stop offset="0.643" stop-color="#ff0be3"/><stop offset="0.652" stop-color="#ff00df"/><stop offset="0.815" stop-color="#ff00a1"/><stop offset="1" stop-color="#ff006b"/></linearGradient><linearGradient id="g113" gradientUnits="userSpaceOnUse" x1="96.1" x2="424.0" y1="0" y2="0"><stop offset="0" stop-color="#0098ff"/><stop offset="0.195" stop-color="#0089ff"/><stop offset="0.204" stop-color="#1988ff"/><stop offset="0.232" stop-color="#3985ff"/><stop offset="0.302" stop-color="#687dff"/><stop offset="0.476" stop-color="#c15fff"/><stop offset="0.573" stop-color="#f13fff"/><stop offset="0.607" stop-color="#ff2cfc"/><stop offset="0.634" stop-color="#f1e"/><stop offset="0.643" stop-color="#ff00ea"/><stop offset="0.799" stop-color="#ff00ae"/><stop offset="1" stop-color="#ff0073"/></linearGradient><linearGradient id="g114" gradientUnits="userSpaceOnUse" x1="97.0" x2="416.9" y1="0" y2="0"><stop offset="0" stop-color="#0095ff"/><stop offset="0.197" stop-color="#0085ff"/><stop offset="0.206" stop-color="#1b84ff"/><stop offset="0.234" stop-color="#3981ff"/><stop offset="0.309" stop-color="#6a78ff"/><stop offset="0.481" stop-color="#be59ff"/><stop offset="0.575" stop-color="#eb39ff"/><stop offset="0.616" stop-color="#ff20ff"/><stop offset="0.631" stop-color="#ff0cf8"/><stop offset="0.641" stop-color="#ff00f3"/><stop offset="0.791" stop-color="#ff00b8"/><stop offset="1" stop-color="#ff007b"/></linearGradient><linearGradient id="g115" gradientUnits="userSpaceOnUse" x1="98.0" x2="409.9" y1="0" y2="0"><stop offset="0" stop-color="#0092ff"/><stop offset="0.196" stop-color="#0082ff"/><stop offset="0.205" stop-color="#1781ff"/><stop offset="0.231" stop-color="#347eff"/><stop offset="0.298" stop-color="#6176ff"/><stop offset="0.474" stop-color="#b657ff"/><stop offset="0.571" stop-color="#e237ff"/><stop offset="0.612" stop-color="#f51cff"/><stop offset="0.625" stop-color="#fb0cff"/><stop offset="0.635" stop-color="#ff00fe"/><stop offset="0.779" stop-color="#ff00c4"/><stop offset="1" stop-color="#ff0082"/></linearGradient><linearGradient id="g116" gradientUnits="userSpaceOnUse" x1="99.0" x2="402.8" y1="0" y2="0"><stop offset="0" stop-color="#008fff"/><stop offset="0.197" stop-color="#007eff"/><stop offset="0.207" stop-color="#197dff"/><stop offset="0.237" stop-color="#387aff"/><stop offset="0.316" stop-color="#6870ff"/><stop offset="0.484" stop-color="#b550ff"/><stop offset="0.572" stop-color="#dc31ff"/><stop offset="0.609" stop-color="#ec18ff"/><stop offset="0.618" stop-color="#f10bff"/><stop offset="0.628" stop-color="#f500ff"/><stop offset="0.655" stop-color="#ff00fd"/><stop offset="0.806" stop-color="#ff00c2"/><stop offset="1" stop-color="#ff008a"/></linearGradient><linearGradient id="g117" gradientUnits="userSpaceOnUse" x1="99.9" x2="395.8" y1="0" y2="0"><stop offset="0" stop-color="#008bff"/><stop offset="0.199" stop-color="#007aff"/><stop offset="0.209" stop-color="#1b79ff"/><stop offset="0.24" stop-color="#3876ff"/><stop offset="0.321" stop-color="#686bff"/><stop offset="0.483" stop-color="#b04cff"/><stop offset="0.568" stop-color="#d32eff"/><stop offset="0.601" stop-color="#e218ff"/><stop offset="0.611" stop-color="#e60bff"/><stop offset="0.622" stop-color="#eb00ff"/><stop offset="0.672" stop-color="#ff00fd"/><stop offset="0.828" stop-color="#ff00c3"/><stop offset="1" stop-color="#ff0092"/></linearGradient><linearGradient id="g118" gradientUnits="userSpaceOnUse" x1="100.9" x2="388.7" y1="0" y2="0"><stop offset="0" stop-color="#08f"/><stop offset="0.198" stop-color="#07f"/><stop offset="0.208" stop-color="#1776ff"/><stop offset="0.236" stop-color="#3473ff"/><stop offset="0.312" stop-color="#6169ff"/><stop offset="0.479" stop-color="#aa49ff"/><stop offset="0.563" stop-color="#cb2cff"/><stop offset="0.597" stop-color="#d914ff"/><stop offset="0.608" stop-color="#de00ff"/><stop offset="0.691" stop-color="#ff00fd"/><stop offset="0.854" stop-color="#ff00c2"/><stop offset="1" stop-color="#ff009a"/></linearGradient><linearGradient id="g119" gradientUnits="userSpaceOnUse" x1="102.0" x2="381.7" y1="0" y2="0"><stop offset="0" stop-color="#0085ff"/><stop offset="0.2" stop-color="#0073ff"/><stop offset="0.211" stop-color="#1972ff"/><stop offset="0.243" stop-color="#376eff"/><stop offset="0.329" stop-color="#6663ff"/><stop offset="0.486" stop-color="#a843ff"/><stop offset="0.564" stop-color="#c625ff"/><stop offset="0.593" stop-color="#d10fff"/><stop offset="0.604" stop-color="#d500ff"/><stop offset="0.711" stop-color="#ff00fd"/><stop offset="0.879" stop-color="#ff00c3"/><stop offset="1" stop-color="#ff00a2"/></linearGradient><linearGradient id="g120" gradientUnits="userSpaceOnUse" x1="103.0" x2="374.7" y1="0" y2="0"><stop offset="0" stop-color="#0081ff"/><stop offset="0.199" stop-color="#006fff"/><stop offset="0.21" stop-color="#166eff"/><stop offset="0.239" stop-color="#336bff"/><stop offset="0.32" stop-color="#6060ff"/><stop offset="0.478" stop-color="#a041ff"/><stop offset="0.555" stop-color="#bd24ff"/><stop offset="0.585" stop-color="#c80eff"/><stop offset="0.596" stop-color="#c0f"/><stop offset="0.732" stop-color="#ff00fe"/><stop offset="0.908" stop-color="#ff00c3"/><stop offset="1" stop-color="#f0a"/></linearGradient><linearGradient id="g121" gradientUnits="userSpaceOnUse" x1="104.1" x2="367.6" y1="0" y2="0"><stop offset="0" stop-color="#007eff"/><stop offset="0.201" stop-color="#006bff"/><stop offset="0.212" stop-color="#186aff"/><stop offset="0.246" stop-color="#3666ff"/><stop offset="0.337" stop-color="#6559ff"/><stop offset="0.485" stop-color="#9e3aff"/><stop offset="0.553" stop-color="#b720ff"/><stop offset="0.576" stop-color="#bf0eff"/><stop offset="0.587" stop-color="#c300ff"/><stop offset="0.754" stop-color="#ff00fe"/><stop offset="0.936" stop-color="#ff00c3"/><stop offset="1" stop-color="#ff00b3"/></linearGradient><linearGradient id="g122" gradientUnits="userSpaceOnUse" x1="105.2" x2="360.6" y1="0" y2="0"><stop offset="0" stop-color="#007aff"/><stop offset="0.199" stop-color="#0068ff"/><stop offset="0.211" stop-color="#1567ff"/><stop offset="0.242" stop-color="#3263ff"/><stop offset="0.328" stop-color="#5e57ff"/><stop offset="0.48" stop-color="#9837ff"/><stop offset="0.547" stop-color="#af1dff"/><stop offset="0.566" stop-color="#b60dff"/><stop offset="0.578" stop-color="#ba00ff"/><stop offset="0.781" stop-color="#ff00fd"/><stop offset="0.973" stop-color="#ff00c2"/><stop offset="1" stop-color="#f0b"/></linearGradient><linearGradient id="g123" gradientUnits="userSpaceOnUse" x1="106.3" x2="353.5" y1="0" y2="0"><stop offset="0" stop-color="#07f"/><stop offset="0.202" stop-color="#0064ff"/><stop offset="0.214" stop-color="#1862ff"/><stop offset="0.25" stop-color="#355eff"/><stop offset="0.347" stop-color="#6450ff"/><stop offset="0.484" stop-color="#9531ff"/><stop offset="0.544" stop-color="#a917ff"/><stop offset="0.56" stop-color="#af05ff"/><stop offset="0.573" stop-color="#b300ff"/><stop offset="0.806" stop-color="#ff00fd"/><stop offset="1" stop-color="#ff00c4"/></linearGradient><linearGradient id="g124" gradientUnits="userSpaceOnUse" x1="107.5" x2="346.5" y1="0" y2="0"><stop offset="0" stop-color="#0073ff"/><stop offset="0.204" stop-color="#0260ff"/><stop offset="0.217" stop-color="#1a5eff"/><stop offset="0.258" stop-color="#3959ff"/><stop offset="0.367" stop-color="#6848ff"/><stop offset="0.488" stop-color="#922bff"/><stop offset="0.537" stop-color="#a213ff"/><stop offset="0.554" stop-color="#a700ff"/><stop offset="0.833" stop-color="#ff00fd"/><stop offset="1" stop-color="#ff00cd"/></linearGradient><linearGradient id="g125" gradientUnits="userSpaceOnUse" x1="108.6" x2="339.5" y1="0" y2="0"><stop offset="0" stop-color="#006fff"/><stop offset="0.203" stop-color="#005cff"/><stop offset="0.216" stop-color="#185aff"/><stop offset="0.255" stop-color="#3555ff"/><stop offset="0.359" stop-color="#6345ff"/><stop offset="0.481" stop-color="#8c28ff"/><stop offset="0.528" stop-color="#9a11ff"/><stop offset="0.541" stop-color="#9e00ff"/><stop offset="0.861" stop-color="#ff00fd"/><stop offset="1" stop-color="#ff00d6"/></linearGradient><linearGradient id="g126" gradientUnits="userSpaceOnUse" x1="109.8" x2="332.4" y1="0" y2="0"><stop offset="0" stop-color="#006cff"/><stop offset="0.202" stop-color="#0058ff"/><stop offset="0.215" stop-color="#1656ff"/><stop offset="0.251" stop-color="#3152ff"/><stop offset="0.35" stop-color="#5d43ff"/><stop offset="0.471" stop-color="#8526ff"/><stop offset="0.516" stop-color="#9210ff"/><stop offset="0.529" stop-color="#9600ff"/><stop offset="0.892" stop-color="#ff00fe"/><stop offset="1" stop-color="#ff00df"/></linearGradient><linearGradient id="g127" gradientUnits="userSpaceOnUse" x1="111.0" x2="325.4" y1="0" y2="0"><stop offset="0" stop-color="#0068ff"/><stop offset="0.205" stop-color="#0054ff"/><stop offset="0.219" stop-color="#1852ff"/><stop offset="0.265" stop-color="#374cff"/><stop offset="0.386" stop-color="#6637ff"/><stop offset="0.479" stop-color="#831cff"/><stop offset="0.507" stop-color="#8b0bff"/><stop offset="0.521" stop-color="#8f00ff"/><stop offset="0.926" stop-color="#ff00fe"/><stop offset="1" stop-color="#ff00e9"/></linearGradient><linearGradient id="g128" gradientUnits="userSpaceOnUse" x1="112.2" x2="318.3" y1="0" y2="0"><stop offset="0" stop-color="#0064ff"/><stop offset="0.203" stop-color="#0050ff"/><stop offset="0.217" stop-color="#164eff"/><stop offset="0.261" stop-color="#3348ff"/><stop offset="0.377" stop-color="#6034ff"/><stop offset="0.469" stop-color="#7c19ff"/><stop offset="0.493" stop-color="#830aff"/><stop offset="0.507" stop-color="#8700ff"/><stop offset="0.966" stop-color="#ff00fd"/><stop offset="1" stop-color="#ff00f4"/></linearGradient><linearGradient id="g129" gradientUnits="userSpaceOnUse" x1="113.5" x2="311.3" y1="0" y2="0"><stop offset="0" stop-color="#0060ff"/><stop offset="0.202" stop-color="#004bff"/><stop offset="0.217" stop-color="#1549ff"/><stop offset="0.258" stop-color="#3044ff"/><stop offset="0.369" stop-color="#5b31ff"/><stop offset="0.455" stop-color="#7417ff"/><stop offset="0.475" stop-color="#7a0bff"/><stop offset="0.49" stop-color="#7e00ff"/><stop offset="1" stop-color="#ff00fe"/></linearGradient><linearGradient id="g130" gradientUnits="userSpaceOnUse" x1="114.7" x2="304.2" y1="0" y2="0"><stop offset="0" stop-color="#005bff"/><stop offset="0.205" stop-color="#0046ff"/><stop offset="0.221" stop-color="#1844ff"/><stop offset="0.268" stop-color="#343eff"/><stop offset="0.4" stop-color="#6123ff"/><stop offset="0.453" stop-color="#700eff"/><stop offset="0.468" stop-color="#7400ff"/><stop offset="1" stop-color="#f500ff"/></linearGradient><linearGradient id="g131" gradientUnits="userSpaceOnUse" x1="116.0" x2="297.2" y1="0" y2="0"><stop offset="0" stop-color="#0057ff"/><stop offset="0.203" stop-color="#0042ff"/><stop offset="0.22" stop-color="#1540ff"/><stop offset="0.269" stop-color="#3239ff"/><stop offset="0.396" stop-color="#5d1eff"/><stop offset="0.434" stop-color="#680dff"/><stop offset="0.451" stop-color="#6c00ff"/><stop offset="1" stop-color="#eb00ff"/></linearGradient><linearGradient id="g132" gradientUnits="userSpaceOnUse" x1="117.3" x2="290.2" y1="0" y2="0"><stop offset="0" stop-color="#0053ff"/><stop offset="0.202" stop-color="#003dff"/><stop offset="0.22" stop-color="#143bff"/><stop offset="0.266" stop-color="#2f34ff"/><stop offset="0.382" stop-color="#561aff"/><stop offset="0.416" stop-color="#600aff"/><stop offset="0.434" stop-color="#6400ff"/><stop offset="0.954" stop-color="#d700ff"/><stop offset="1" stop-color="#e100ff"/></linearGradient><linearGradient id="g133" gradientUnits="userSpaceOnUse" x1="118.6" x2="283.1" y1="0" y2="0"><stop offset="0" stop-color="#004eff"/><stop offset="0.206" stop-color="#0037ff"/><stop offset="0.224" stop-color="#1735ff"/><stop offset="0.285" stop-color="#352bff"/><stop offset="0.376" stop-color="#5213ff"/><stop offset="0.394" stop-color="#5709ff"/><stop offset="0.412" stop-color="#5b00ff"/><stop offset="0.8" stop-color="#af00ff"/><stop offset="1" stop-color="#d700ff"/></linearGradient><linearGradient id="g134" gradientUnits="userSpaceOnUse" x1="120.0" x2="276.1" y1="0" y2="0"><stop offset="0" stop-color="#0049ff"/><stop offset="0.204" stop-color="#0032ff"/><stop offset="0.223" stop-color="#162fff"/><stop offset="0.28" stop-color="#3225ff"/><stop offset="0.357" stop-color="#4a0fff"/><stop offset="0.376" stop-color="#4f00ff"/><stop offset="0.682" stop-color="#9100ff"/><stop offset="1" stop-color="#cd00ff"/></linearGradient><linearGradient id="g135" gradientUnits="userSpaceOnUse" x1="121.4" x2="269.0" y1="0" y2="0"><stop offset="0" stop-color="#04f"/><stop offset="0.203" stop-color="#002cff"/><stop offset="0.223" stop-color="#1529ff"/><stop offset="0.284" stop-color="#321cff"/><stop offset="0.338" stop-color="#4209ff"/><stop offset="0.358" stop-color="#4800ff"/><stop offset="0.635" stop-color="#8300ff"/><stop offset="1" stop-color="#c400ff"/></linearGradient><linearGradient id="g136" gradientUnits="userSpaceOnUse" x1="122.9" x2="262.0" y1="0" y2="0"><stop offset="0" stop-color="#003eff"/><stop offset="0.207" stop-color="#0224ff"/><stop offset="0.229" stop-color="#1820ff"/><stop offset="0.3" stop-color="#350bff"/><stop offset="0.321" stop-color="#3b00ff"/><stop offset="0.55" stop-color="#6e00ff"/><stop offset="1" stop-color="#b0f"/></linearGradient><linearGradient id="g137" gradientUnits="userSpaceOnUse" x1="124.4" x2="255.0" y1="0" y2="0"><stop offset="0" stop-color="#0038ff"/><stop offset="0.198" stop-color="#001dff"/><stop offset="0.221" stop-color="#1418ff"/><stop offset="0.267" stop-color="#2908ff"/><stop offset="0.29" stop-color="#3000ff"/><stop offset="0.473" stop-color="#5c00ff"/><stop offset="0.977" stop-color="#af00ff"/><stop offset="1" stop-color="#b200ff"/></linearGradient><linearGradient id="g138" gradientUnits="userSpaceOnUse" x1="126.0" x2="247.9" y1="0" y2="0"><stop offset="0" stop-color="#0031ff"/><stop offset="0.172" stop-color="#0018ff"/><stop offset="0.197" stop-color="#0012ff"/><stop offset="0.221" stop-color="#1409ff"/><stop offset="0.246" stop-color="#2000ff"/><stop offset="0.361" stop-color="#4100ff"/><stop offset="0.656" stop-color="#70f"/><stop offset="1" stop-color="#a900ff"/></linearGradient><linearGradient id="g139" gradientUnits="userSpaceOnUse" x1="127.7" x2="240.9" y1="0" y2="0"><stop offset="0" stop-color="#0029ff"/><stop offset="0.14" stop-color="#0013ff"/><stop offset="0.175" stop-color="#0005ff"/><stop offset="0.202" stop-color="#00f"/><stop offset="0.228" stop-color="#1800ff"/><stop offset="0.316" stop-color="#3400ff"/><stop offset="0.553" stop-color="#6200ff"/><stop offset="1" stop-color="#a100ff"/></linearGradient><linearGradient id="g140" gradientUnits="userSpaceOnUse" x1="129.4" x2="233.8" y1="0" y2="0"><stop offset="0" stop-color="#0020ff"/><stop offset="0.0952" stop-color="#000eff"/><stop offset="0.124" stop-color="#00f"/><stop offset="0.19" stop-color="#00f"/><stop offset="0.229" stop-color="#1800ff"/><stop offset="0.333" stop-color="#3700ff"/><stop offset="0.61" stop-color="#60f"/><stop offset="1" stop-color="#9800ff"/></linearGradient><linearGradient id="g141" gradientUnits="userSpaceOnUse" x1="131.3" x2="226.8" y1="0" y2="0"><stop offset="0" stop-color="#0013ff"/><stop offset="0.0417" stop-color="#0006ff"/><stop offset="0.0729" stop-color="#00f"/><stop offset="0.188" stop-color="#00f"/><stop offset="0.219" stop-color="#1500ff"/><stop offset="0.313" stop-color="#3000ff"/><stop offset="0.573" stop-color="#5c00ff"/><stop offset="1" stop-color="#8f00ff"/></linearGradient><linearGradient id="g142" gradientUnits="userSpaceOnUse" x1="133.3" x2="219.7" y1="0" y2="0"><stop offset="0" stop-color="#00f"/><stop offset="0.184" stop-color="#00f"/><stop offset="0.218" stop-color="#1700ff"/><stop offset="0.333" stop-color="#30f"/><stop offset="0.644" stop-color="#6000ff"/><stop offset="1" stop-color="#8700ff"/></linearGradient><linearGradient id="g143" gradientUnits="userSpaceOnUse" x1="135.4" x2="212.7" y1="0" y2="0"><stop offset="0" stop-color="#00f"/><stop offset="0.167" stop-color="#00f"/><stop offset="0.205" stop-color="#1400ff"/><stop offset="0.321" stop-color="#2f00ff"/><stop offset="0.641" stop-color="#5a00ff"/><stop offset="1" stop-color="#7e00ff"/></linearGradient><linearGradient id="g144" gradientUnits="userSpaceOnUse" x1="137.7" x2="205.7" y1="0" y2="0"><stop offset="0" stop-color="#00f"/><stop offset="0.147" stop-color="#00f"/><stop offset="0.191" stop-color="#1300ff"/><stop offset="0.324" stop-color="#2f00ff"/><stop offset="0.691" stop-color="#5a00ff"/><stop offset="1" stop-color="#7600ff"/></linearGradient><linearGradient id="g145" gradientUnits="userSpaceOnUse" x1="140.3" x2="198.6" y1="0" y2="0"><stop offset="0" stop-color="#00f"/><stop offset="0.136" stop-color="#00f"/><stop offset="0.186" stop-color="#1700ff"/><stop offset="0.373" stop-color="#3500ff"/><stop offset="0.864" stop-color="#6200ff"/><stop offset="1" stop-color="#6d00ff"/></linearGradient><linearGradient id="g146" gradientUnits="userSpaceOnUse" x1="143.5" x2="191.6" y1="0" y2="0"><stop offset="0" stop-color="#00f"/><stop offset="0.0816" stop-color="#00f"/><stop offset="0.143" stop-color="#1500ff"/><stop offset="0.347" stop-color="#3100ff"/><stop offset="0.898" stop-color="#5d00ff"/><stop offset="1" stop-color="#6400ff"/></linearGradient><linearGradient id="g147" gradientUnits="userSpaceOnUse" x1="146.9" x2="184.5" y1="0" y2="0"><stop offset="0" stop-color="#00f"/><stop offset="0.0789" stop-color="#1500ff"/><stop offset="0.316" stop-color="#2f00ff"/><stop offset="0.974" stop-color="#5900ff"/><stop offset="1" stop-color="#5a00ff"/></linearGradient><linearGradient id="g148" gradientUnits="userSpaceOnUse" x1="150.4" x2="177.5" y1="0" y2="0"><stop offset="0" stop-color="#1800ff"/><stop offset="0.429" stop-color="#3600ff"/><stop offset="1" stop-color="#5000ff"/></linearGradient><linearGradient id="g149" gradientUnits="userSpaceOnUse" x1="154.1" x2="170.5" y1="0" y2="0"><stop offset="0" stop-color="#2500ff"/><stop offset="1" stop-color="#4600ff"/></linearGradient><linearGradient id="g150" gradientUnits="userSpaceOnUse" x1="158.0" x2="163.4" y1="0" y2="0"><stop offset="0" stop-color="#2f00ff"/><stop offset="1" stop-color="#3a00ff"/></linearGradient><clipPath id="lc"><path d="M161.0 530.4 L160.6 530.4 L159.9 530.2 L158.4 529.3 L155.7 527.1 L151.1 523.4 L143.7 516.9 L142.3 515.5 L140.8 513.9 L139.2 512.0 L137.4 509.8 L135.5 507.1 L133.4 504.0 L131.1 500.4 L128.7 496.2 L126.1 491.4 L123.3 485.9 L120.3 479.5 L117.2 472.2 L113.7 463.9 L110.0 454.6 L106.0 444.2 L101.9 432.5 L97.7 419.6 L93.6 405.3 L89.5 389.7 L85.3 372.8 L81.3 354.7 L77.3 335.5 L73.6 315.7 L70.2 295.3 L67.2 274.7 L64.7 254.2 L62.8 234.0 L61.4 214.4 L60.8 195.5 L60.8 177.4 L61.6 160.4 L63.3 144.6 L65.7 130.1 L69.0 117.3 L73.1 106.2 L77.9 97.1 L83.4 89.9 L89.3 84.9 L95.7 81.7 L102.4 80.2 L109.4 80.2 L116.4 81.4 L123.6 83.5 L130.9 86.3 L138.1 89.4 L145.3 92.9 L152.3 96.6 L159.2 100.5 L165.9 104.5 L172.6 108.6 L179.1 112.9 L185.7 117.3 L192.1 121.9 L198.6 126.6 L205.0 131.4 L211.4 136.3 L215.7 139.7 L236.9 157.1 L258.0 175.2 L279.2 193.9 L300.2 212.8 L321.1 231.8 L341.7 250.5 L361.6 268.8 L380.7 286.3 L398.7 302.7 L415.1 317.7 L429.3 330.7 L441.8 342.2 L452.3 351.6 L460.7 359.4 L467.5 365.6 L472.8 370.5 L477.2 374.4 L480.8 377.8 L493.0 388.9Z"/></clipPath><filter id="sm" filterUnits="userSpaceOnUse" x="50" y="70" width="460" height="470"><feGaussianBlur stdDeviation="0.7 1.6"/></filter></defs><rect x="58" y="75" width="442" height="459" fill="#666"/><g clip-path="url(#lc)"><g filter="url(#sm)"><rect x="91.7" y="80" width="31.7" height="3.6" fill="url(#g0)"/><rect x="86.6" y="83" width="45.1" height="3.6" fill="url(#g1)"/><rect x="83.0" y="86" width="55.6" height="3.6" fill="url(#g2)"/><rect x="80.3" y="89" width="64.5" height="3.6" fill="url(#g3)"/><rect x="78.0" y="92" width="72.7" height="3.6" fill="url(#g4)"/><rect x="75.9" y="95" width="80.3" height="3.6" fill="url(#g5)"/><rect x="74.4" y="98" width="87.2" height="3.6" fill="url(#g6)"/><rect x="72.8" y="101" width="93.9" height="3.6" fill="url(#g7)"/><rect x="71.3" y="104" width="100.2" height="3.6" fill="url(#g8)"/><rect x="70.2" y="107" width="106.0" height="3.6" fill="url(#g9)"/><rect x="69.1" y="110" width="111.7" height="3.6" fill="url(#g10)"/><rect x="68.0" y="113" width="117.3" height="3.6" fill="url(#g11)"/><rect x="67.1" y="116" width="122.5" height="3.6" fill="url(#g12)"/><rect x="66.3" y="119" width="127.5" height="3.6" fill="url(#g13)"/><rect x="65.5" y="122" width="132.4" height="3.6" fill="url(#g14)"/><rect x="64.8" y="125" width="137.2" height="3.6" fill="url(#g15)"/><rect x="64.1" y="128" width="141.9" height="3.6" fill="url(#g16)"/><rect x="63.6" y="131" width="146.3" height="3.6" fill="url(#g17)"/><rect x="63.0" y="134" width="150.7" height="3.6" fill="url(#g18)"/><rect x="62.5" y="137" width="155.0" height="3.6" fill="url(#g19)"/><rect x="62.0" y="140" width="159.2" height="3.6" fill="url(#g20)"/><rect x="61.6" y="143" width="163.3" height="3.6" fill="url(#g21)"/><rect x="61.3" y="146" width="167.2" height="3.6" fill="url(#g22)"/><rect x="61.0" y="149" width="171.2" height="3.6" fill="url(#g23)"/><rect x="60.7" y="152" width="175.1" height="3.6" fill="url(#g24)"/><rect x="60.4" y="155" width="179.1" height="3.6" fill="url(#g25)"/><rect x="60.1" y="158" width="182.8" height="3.6" fill="url(#g26)"/><rect x="60.0" y="161" width="186.5" height="3.6" fill="url(#g27)"/><rect x="59.8" y="164" width="190.1" height="3.6" fill="url(#g28)"/><rect x="59.7" y="167" width="193.7" height="3.6" fill="url(#g29)"/><rect x="59.5" y="170" width="197.4" height="3.6" fill="url(#g30)"/><rect x="59.4" y="173" width="201.0" height="3.6" fill="url(#g31)"/><rect x="59.3" y="176" width="204.5" height="3.6" fill="url(#g32)"/><rect x="59.3" y="179" width="207.9" height="3.6" fill="url(#g33)"/><rect x="59.3" y="182" width="211.3" height="3.6" fill="url(#g34)"/><rect x="59.3" y="185" width="214.7" height="3.6" fill="url(#g35)"/><rect x="59.3" y="188" width="218.1" height="3.6" fill="url(#g36)"/><rect x="59.3" y="191" width="221.5" height="3.6" fill="url(#g37)"/><rect x="59.3" y="194" width="224.8" height="3.6" fill="url(#g38)"/><rect x="59.3" y="197" width="228.1" height="3.6" fill="url(#g39)"/><rect x="59.4" y="200" width="231.3" height="3.6" fill="url(#g40)"/><rect x="59.5" y="203" width="234.6" height="3.6" fill="url(#g41)"/><rect x="59.6" y="206" width="237.8" height="3.6" fill="url(#g42)"/><rect x="59.7" y="209" width="241.0" height="3.6" fill="url(#g43)"/><rect x="59.8" y="212" width="244.2" height="3.6" fill="url(#g44)"/><rect x="60.0" y="215" width="247.4" height="3.6" fill="url(#g45)"/><rect x="60.2" y="218" width="250.5" height="3.6" fill="url(#g46)"/><rect x="60.4" y="221" width="253.6" height="3.6" fill="url(#g47)"/><rect x="60.6" y="224" width="256.8" height="3.6" fill="url(#g48)"/><rect x="60.8" y="227" width="259.9" height="3.6" fill="url(#g49)"/><rect x="61.0" y="230" width="263.0" height="3.6" fill="url(#g50)"/><rect x="61.2" y="233" width="266.0" height="3.6" fill="url(#g51)"/><rect x="61.5" y="236" width="269.1" height="3.6" fill="url(#g52)"/><rect x="61.7" y="239" width="272.1" height="3.6" fill="url(#g53)"/><rect x="62.0" y="242" width="275.1" height="3.6" fill="url(#g54)"/><rect x="62.3" y="245" width="278.1" height="3.6" fill="url(#g55)"/><rect x="62.6" y="248" width="281.1" height="3.6" fill="url(#g56)"/><rect x="62.9" y="251" width="284.0" height="3.6" fill="url(#g57)"/><rect x="63.2" y="254" width="287.0" height="3.6" fill="url(#g58)"/><rect x="63.6" y="257" width="289.9" height="3.6" fill="url(#g59)"/><rect x="63.9" y="260" width="292.9" height="3.6" fill="url(#g60)"/><rect x="64.3" y="263" width="295.8" height="3.6" fill="url(#g61)"/><rect x="64.6" y="266" width="298.7" height="3.6" fill="url(#g62)"/><rect x="65.0" y="269" width="301.6" height="3.6" fill="url(#g63)"/><rect x="65.4" y="272" width="304.5" height="3.6" fill="url(#g64)"/><rect x="65.7" y="275" width="307.4" height="3.6" fill="url(#g65)"/><rect x="66.2" y="278" width="310.3" height="3.6" fill="url(#g66)"/><rect x="66.6" y="281" width="313.1" height="3.6" fill="url(#g67)"/><rect x="67.0" y="284" width="316.0" height="3.6" fill="url(#g68)"/><rect x="67.5" y="287" width="318.8" height="3.6" fill="url(#g69)"/><rect x="67.9" y="290" width="321.7" height="3.6" fill="url(#g70)"/><rect x="68.3" y="293" width="324.5" height="3.6" fill="url(#g71)"/><rect x="68.8" y="296" width="327.4" height="3.6" fill="url(#g72)"/><rect x="69.3" y="299" width="330.2" height="3.6" fill="url(#g73)"/><rect x="69.8" y="302" width="332.9" height="3.6" fill="url(#g74)"/><rect x="70.3" y="305" width="335.7" height="3.6" fill="url(#g75)"/><rect x="70.8" y="308" width="338.5" height="3.6" fill="url(#g76)"/><rect x="71.3" y="311" width="341.2" height="3.6" fill="url(#g77)"/><rect x="71.8" y="314" width="344.0" height="3.6" fill="url(#g78)"/><rect x="72.3" y="317" width="346.7" height="3.6" fill="url(#g79)"/><rect x="72.9" y="320" width="349.5" height="3.6" fill="url(#g80)"/><rect x="73.4" y="323" width="352.2" height="3.6" fill="url(#g81)"/><rect x="74.0" y="326" width="354.9" height="3.6" fill="url(#g82)"/><rect x="74.6" y="329" width="357.6" height="3.6" fill="url(#g83)"/><rect x="75.1" y="332" width="360.3" height="3.6" fill="url(#g84)"/><rect x="75.7" y="335" width="363.1" height="3.6" fill="url(#g85)"/><rect x="76.3" y="338" width="365.7" height="3.6" fill="url(#g86)"/><rect x="76.9" y="341" width="368.4" height="3.6" fill="url(#g87)"/><rect x="77.6" y="344" width="371.1" height="3.6" fill="url(#g88)"/><rect x="78.2" y="347" width="373.8" height="3.6" fill="url(#g89)"/><rect x="78.8" y="350" width="376.4" height="3.6" fill="url(#g90)"/><rect x="79.4" y="353" width="379.1" height="3.6" fill="url(#g91)"/><rect x="80.1" y="356" width="381.7" height="3.6" fill="url(#g92)"/><rect x="80.7" y="359" width="384.3" height="3.6" fill="url(#g93)"/><rect x="81.4" y="362" width="386.9" height="3.6" fill="url(#g94)"/><rect x="82.1" y="365" width="389.5" height="3.6" fill="url(#g95)"/><rect x="82.8" y="368" width="392.1" height="3.6" fill="url(#g96)"/><rect x="83.4" y="371" width="394.7" height="3.6" fill="url(#g97)"/><rect x="84.1" y="374" width="397.3" height="3.6" fill="url(#g98)"/><rect x="84.9" y="377" width="399.8" height="3.6" fill="url(#g99)"/><rect x="85.6" y="380" width="402.4" height="3.6" fill="url(#g100)"/><rect x="86.3" y="383" width="404.9" height="3.6" fill="url(#g101)"/><rect x="87.1" y="386" width="407.3" height="3.6" fill="url(#g102)"/><rect x="87.8" y="389" width="406.6" height="3.6" fill="url(#g103)"/><rect x="88.6" y="392" width="398.7" height="3.6" fill="url(#g104)"/><rect x="89.4" y="395" width="390.9" height="3.6" fill="url(#g105)"/><rect x="90.2" y="398" width="383.1" height="3.6" fill="url(#g106)"/><rect x="91.0" y="401" width="375.2" height="3.6" fill="url(#g107)"/><rect x="91.8" y="404" width="367.4" height="3.6" fill="url(#g108)"/><rect x="92.6" y="407" width="359.5" height="3.6" fill="url(#g109)"/><rect x="93.5" y="410" width="351.6" height="3.6" fill="url(#g110)"/><rect x="94.3" y="413" width="343.7" height="3.6" fill="url(#g111)"/><rect x="95.2" y="416" width="335.8" height="3.6" fill="url(#g112)"/><rect x="96.1" y="419" width="327.9" height="3.6" fill="url(#g113)"/><rect x="97.0" y="422" width="319.9" height="3.6" fill="url(#g114)"/><rect x="98.0" y="425" width="311.9" height="3.6" fill="url(#g115)"/><rect x="99.0" y="428" width="303.9" height="3.6" fill="url(#g116)"/><rect x="99.9" y="431" width="295.9" height="3.6" fill="url(#g117)"/><rect x="100.9" y="434" width="287.8" height="3.6" fill="url(#g118)"/><rect x="102.0" y="437" width="279.7" height="3.6" fill="url(#g119)"/><rect x="103.0" y="440" width="271.6" height="3.6" fill="url(#g120)"/><rect x="104.1" y="443" width="263.5" height="3.6" fill="url(#g121)"/><rect x="105.2" y="446" width="255.4" height="3.6" fill="url(#g122)"/><rect x="106.3" y="449" width="247.2" height="3.6" fill="url(#g123)"/><rect x="107.5" y="452" width="239.0" height="3.6" fill="url(#g124)"/><rect x="108.6" y="455" width="230.8" height="3.6" fill="url(#g125)"/><rect x="109.8" y="458" width="222.6" height="3.6" fill="url(#g126)"/><rect x="111.0" y="461" width="214.3" height="3.6" fill="url(#g127)"/><rect x="112.2" y="464" width="206.1" height="3.6" fill="url(#g128)"/><rect x="113.5" y="467" width="197.8" height="3.6" fill="url(#g129)"/><rect x="114.7" y="470" width="189.5" height="3.6" fill="url(#g130)"/><rect x="116.0" y="473" width="181.2" height="3.6" fill="url(#g131)"/><rect x="117.3" y="476" width="172.8" height="3.6" fill="url(#g132)"/><rect x="118.6" y="479" width="164.5" height="3.6" fill="url(#g133)"/><rect x="120.0" y="482" width="156.1" height="3.6" fill="url(#g134)"/><rect x="121.4" y="485" width="147.6" height="3.6" fill="url(#g135)"/><rect x="122.9" y="488" width="139.1" height="3.6" fill="url(#g136)"/><rect x="124.4" y="491" width="130.6" height="3.6" fill="url(#g137)"/><rect x="126.0" y="494" width="121.9" height="3.6" fill="url(#g138)"/><rect x="127.7" y="497" width="113.2" height="3.6" fill="url(#g139)"/><rect x="129.4" y="500" width="104.4" height="3.6" fill="url(#g140)"/><rect x="131.3" y="503" width="95.5" height="3.6" fill="url(#g141)"/><rect x="133.3" y="506" width="86.5" height="3.6" fill="url(#g142)"/><rect x="135.4" y="509" width="77.3" height="3.6" fill="url(#g143)"/><rect x="137.7" y="512" width="68.0" height="3.6" fill="url(#g144)"/><rect x="140.3" y="515" width="58.3" height="3.6" fill="url(#g145)"/><rect x="143.5" y="518" width="48.1" height="3.6" fill="url(#g146)"/><rect x="146.9" y="521" width="37.7" height="3.6" fill="url(#g147)"/><rect x="150.4" y="524" width="27.1" height="3.6" fill="url(#g148)"/><rect x="154.1" y="527" width="16.3" height="3.6" fill="url(#g149)"/><rect x="158.0" y="530" width="5.4" height="3.6" fill="url(#g150)"/></g></g><path d="M113.3 98.4h7M116.8 94.9v7M172.5 98.4h7M176.0 94.9v7M113.3 152.7h7M116.8 149.2v7M172.5 152.7h7M176.0 149.2v7M231.6 152.7h7M235.1 149.2v7M113.3 207.0h7M116.8 203.5v7M172.5 207.0h7M176.0 203.5v7M231.6 207.0h7M235.1 203.5v7M290.8 207.0h7M294.3 203.5v7M113.3 261.3h7M116.8 257.8v7M172.5 261.3h7M176.0 257.8v7M231.6 261.3h7M235.1 257.8v7M290.8 261.3h7M294.3 257.8v7M349.9 261.3h7M353.4 257.8v7M113.3 315.6h7M116.8 312.1v7M172.5 315.6h7M176.0 312.1v7M231.6 315.6h7M235.1 312.1v7M290.8 315.6h7M294.3 312.1v7M349.9 315.6h7M353.4 312.1v7M113.3 369.9h7M116.8 366.4v7M172.5 369.9h7M176.0 366.4v7M231.6 369.9h7M235.1 366.4v7M290.8 369.9h7M294.3 366.4v7M349.9 369.9h7M353.4 366.4v7M409.0 369.9h7M412.5 366.4v7M113.3 424.2h7M116.8 420.7v7M172.5 424.2h7M176.0 420.7v7M231.6 424.2h7M235.1 420.7v7M290.8 424.2h7M294.3 420.7v7M349.9 424.2h7M353.4 420.7v7M113.3 478.5h7M116.8 475.0v7M172.5 478.5h7M176.0 475.0v7M231.6 478.5h7M235.1 475.0v7M290.8 478.5h7M294.3 475.0v7" stroke="#b0b0b0" stroke-width="1" opacity=".8"/><path d="M161.0 530.4 L160.6 530.4 L159.9 530.2 L158.4 529.3 L155.7 527.1 L151.1 523.4 L143.7 516.9 L142.3 515.5 L140.8 513.9 L139.2 512.0 L137.4 509.8 L135.5 507.1 L133.4 504.0 L131.1 500.4 L128.7 496.2 L126.1 491.4 L123.3 485.9 L120.3 479.5 L117.2 472.2 L113.7 463.9 L110.0 454.6 L106.0 444.2 L101.9 432.5 L97.7 419.6 L93.6 405.3 L89.5 389.7 L85.3 372.8 L81.3 354.7 L77.3 335.5 L73.6 315.7 L70.2 295.3 L67.2 274.7 L64.7 254.2 L62.8 234.0 L61.4 214.4 L60.8 195.5 L60.8 177.4 L61.6 160.4 L63.3 144.6 L65.7 130.1 L69.0 117.3 L73.1 106.2 L77.9 97.1 L83.4 89.9 L89.3 84.9 L95.7 81.7 L102.4 80.2 L109.4 80.2 L116.4 81.4 L123.6 83.5 L130.9 86.3 L138.1 89.4 L145.3 92.9 L152.3 96.6 L159.2 100.5 L165.9 104.5 L172.6 108.6 L179.1 112.9 L185.7 117.3 L192.1 121.9 L198.6 126.6 L205.0 131.4 L211.4 136.3 L215.7 139.7 L236.9 157.1 L258.0 175.2 L279.2 193.9 L300.2 212.8 L321.1 231.8 L341.7 250.5 L361.6 268.8 L380.7 286.3 L398.7 302.7 L415.1 317.7 L429.3 330.7 L441.8 342.2 L452.3 351.6 L460.7 359.4 L467.5 365.6 L472.8 370.5 L477.2 374.4 L480.8 377.8 L493.0 388.9" fill="none" stroke="#333" stroke-width="2.7" stroke-linejoin="round"/><path d="M493.0 388.9 L161.0 530.4" stroke="#3a2c3c" stroke-width="2.1"/><path d="M442.0 353.3 L194.5 152.0 L150.9 496.7 Z" fill="none" stroke="#2b2b2b" stroke-width="1.8" stroke-dasharray="1.6 1.7"/><path d="M441.7 353.5 L196.6 155.7 L157.1 492.4 Z" fill="none" stroke="#0a0a0a" stroke-width="2.2" stroke-linejoin="miter"/><circle cx="262.0" cy="338.1" r="1.9" fill="#505050"/><circle cx="161.0" cy="530.4" r="3.6" fill="#4018c8" stroke="#a89be0" stroke-width="0.9"/><circle cx="131.9" cy="501.6" r="3.6" fill="#0a0cc8" stroke="#a8b0e8" stroke-width="0.9"/><circle cx="112.5" cy="460.9" r="3.6" fill="#1460c8" stroke="#9cc0ec" stroke-width="0.9"/><circle cx="85.3" cy="372.8" r="3.6" fill="#1898b0" stroke="#58c8d8" stroke-width="0.9"/><circle cx="63.3" cy="240.6" r="3.6" fill="#18c880" stroke="#40e8a0" stroke-width="0.9"/><circle cx="66.7" cy="125.6" r="3.6" fill="#28dc50" stroke="#60f080" stroke-width="0.9"/><circle cx="102.4" cy="80.2" r="3.6" fill="#2cd820" stroke="#50e840" stroke-width="0.9"/><circle cx="150.0" cy="95.4" r="3.6" fill="#2cc81c" stroke="#40dc30" stroke-width="0.9"/><circle cx="194.3" cy="123.4" r="3.6" fill="#48be18" stroke="#60d030" stroke-width="0.9"/><circle cx="279.2" cy="193.9" r="3.6" fill="#7da523" stroke="#94b830" stroke-width="0.9"/><circle cx="361.6" cy="268.8" r="3.6" fill="#af8719" stroke="#c09828" stroke-width="0.9"/><circle cx="429.3" cy="330.7" r="3.6" fill="#c0560f" stroke="#d07028" stroke-width="0.9"/><circle cx="467.5" cy="365.6" r="3.6" fill="#d81820" stroke="#f09090" stroke-width="0.9"/><circle cx="493.0" cy="388.9" r="3.6" fill="#e01030" stroke="#f09098" stroke-width="0.9"/><g font-family="Liberation Sans,Arial,sans-serif" font-size="12"><text x="147.0" y="530.7" fill="#dcdcdc" text-anchor="end">400</text><text x="121.4" y="506.3" fill="#dcdcdc" text-anchor="end">470</text><text x="101.2" y="465.8" fill="#dcdcdc" text-anchor="end">480</text><text x="94.3" y="377.1" fill="#1a6c78">490</text><text x="72.3" y="244.9" fill="#14783c">500</text><text x="75.7" y="129.9" fill="#1a7a2c">510</text><text x="87.9" y="86.3" fill="#dcdcdc" text-anchor="end">520</text><text x="159.0" y="99.7" fill="#dcdcdc">530</text><text x="203.3" y="127.7" fill="#dcdcdc">540</text><text x="288.2" y="198.2" fill="#dcdcdc">560</text><text x="370.6" y="273.1" fill="#dcdcdc">580</text><text x="438.3" y="335.0" fill="#dcdcdc">600</text><text x="476.5" y="369.9" fill="#dcdcdc">620</text><text x="481.4" y="391.4" fill="#a01c34" text-anchor="end">700</text></g><g font-family="Liberation Sans,Arial,sans-serif" font-size="11" font-weight="bold" fill="#fff" text-anchor="end"><text x="485.8" y="90.8" xml:space="preserve" textLength="136.5" lengthAdjust="spacing">Input:  AdobeRGB1998.icc</text><text x="485.8" y="104.8" xml:space="preserve" textLength="189.3" lengthAdjust="spacing">Output: Mi monitor_AdobeRGB.icm</text><text x="485.8" y="118.7" xml:space="preserve" textLength="166.8" lengthAdjust="spacing">White point:  x = 0.346  y = 0.359</text><text x="485.8" y="132.6" xml:space="preserve" textLength="104.8" lengthAdjust="spacing">08-Jul-2024 21:31:44</text></g><g fill="#111"><rect x="117" y="528" width="1" height="5"/><rect x="117" y="76" width="1" height="5"/><rect x="176" y="528" width="1" height="5"/><rect x="176" y="76" width="1" height="5"/><rect x="235" y="528" width="1" height="5"/><rect x="235" y="76" width="1" height="5"/><rect x="295" y="528" width="1" height="5"/><rect x="295" y="76" width="1" height="5"/><rect x="354" y="528" width="1" height="5"/><rect x="354" y="76" width="1" height="5"/><rect x="413" y="528" width="1" height="5"/><rect x="413" y="76" width="1" height="5"/><rect x="472" y="528" width="1" height="5"/><rect x="472" y="76" width="1" height="5"/><rect x="59" y="478" width="4.5" height="1"/><rect x="493.5" y="478" width="5" height="1"/><rect x="59" y="424" width="4.5" height="1"/><rect x="493.5" y="424" width="5" height="1"/><rect x="59" y="370" width="4.5" height="1"/><rect x="493.5" y="370" width="5" height="1"/><rect x="59" y="315" width="4.5" height="1"/><rect x="493.5" y="315" width="5" height="1"/><rect x="59" y="261" width="4.5" height="1"/><rect x="493.5" y="261" width="5" height="1"/><rect x="59" y="207" width="4.5" height="1"/><rect x="493.5" y="207" width="5" height="1"/><rect x="59" y="152" width="4.5" height="1"/><rect x="493.5" y="152" width="5" height="1"/><rect x="59" y="98" width="4.5" height="1"/><rect x="493.5" y="98" width="5" height="1"/><rect x="58" y="75" width="1" height="459"/><rect x="58" y="75" width="442" height="1"/><rect x="498" y="75" width="2" height="459"/><rect x="58" y="532.4" width="442" height="1.6"/></g></svg>
<svg style="left:551px;top:55px" width="234" height="233" viewBox="0 0 234 233"><defs><linearGradient id="hue" x1="0" x2="1" y1="0" y2="0"><stop offset="0" stop-color="#ff0000"/><stop offset="0.03" stop-color="#ff1200"/><stop offset="0.09" stop-color="#ff8400"/><stop offset="0.157" stop-color="#ffff00"/><stop offset="0.2" stop-color="#a0ff00"/><stop offset="0.245" stop-color="#14ff00"/><stop offset="0.375" stop-color="#00ff20"/><stop offset="0.44" stop-color="#00ff90"/><stop offset="0.502" stop-color="#00ffff"/><stop offset="0.56" stop-color="#0090ff"/><stop offset="0.64" stop-color="#0020ff"/><stop offset="0.69" stop-color="#1410ff"/><stop offset="0.74" stop-color="#8020ff"/><stop offset="0.815" stop-color="#ff20ff"/><stop offset="0.9" stop-color="#ff2090"/><stop offset="0.97" stop-color="#ff0018"/><stop offset="1" stop-color="#ff0000"/></linearGradient><linearGradient id="uhue" gradientUnits="userSpaceOnUse" x1="0" x2="234" y1="0" y2="0"><stop offset="0" stop-color="#ff0000"/><stop offset="0.157" stop-color="#ffff00"/><stop offset="0.23" stop-color="#30ff00"/><stop offset="0.27" stop-color="#00f400"/><stop offset="0.36" stop-color="#00f010"/><stop offset="0.43" stop-color="#00ec70"/><stop offset="0.502" stop-color="#00f0f0"/><stop offset="0.56" stop-color="#0090ff"/><stop offset="0.64" stop-color="#0020ff"/><stop offset="0.69" stop-color="#1410ff"/><stop offset="1" stop-color="#ff0000"/></linearGradient><linearGradient id="sat" x1="0" x2="0" y1="0" y2="1"><stop offset="0" stop-color="#848484" stop-opacity="0"/><stop offset=".25" stop-color="#848484" stop-opacity=".18"/><stop offset=".5" stop-color="#848484" stop-opacity=".43"/><stop offset=".75" stop-color="#848484" stop-opacity=".71"/><stop offset="1" stop-color="#848484" stop-opacity="1"/></linearGradient><linearGradient id="umg" gradientUnits="userSpaceOnUse" x1="0" x2="234" y1="0" y2="0"><stop offset=".25" stop-color="#fff" stop-opacity=".92"/><stop offset=".45" stop-color="#fff" stop-opacity=".85"/><stop offset=".6" stop-color="#fff" stop-opacity=".6"/><stop offset=".72" stop-color="#fff" stop-opacity=".4"/></linearGradient><mask id="um" maskUnits="userSpaceOnUse" x="0" y="-10" width="234" height="250"><rect y="-10" width="234" height="250" fill="url(#umg)"/></mask><linearGradient id="udk" gradientUnits="userSpaceOnUse" x1="0" x2="0" y1="0" y2="170"><stop offset="0" stop-color="#003020" stop-opacity="0"/><stop offset=".5" stop-color="#003828" stop-opacity=".2"/><stop offset="1" stop-color="#004838" stop-opacity=".42"/></linearGradient><linearGradient id="utl" gradientUnits="userSpaceOnUse" x1="0" x2="234" y1="0" y2="0"><stop offset=".22" stop-color="#0070ff" stop-opacity="0"/><stop offset=".3" stop-color="#0070ff" stop-opacity=".3"/><stop offset=".4" stop-color="#0070ff" stop-opacity=".28"/><stop offset=".5" stop-color="#0070ff" stop-opacity="0"/></linearGradient><linearGradient id="utv" gradientUnits="userSpaceOnUse" x1="0" x2="0" y1="0" y2="170"><stop offset=".1" stop-color="#fff" stop-opacity="0"/><stop offset="1" stop-color="#fff" stop-opacity="1"/></linearGradient><mask id="utm" maskUnits="userSpaceOnUse" x="0" y="-10" width="234" height="250"><rect y="-10" width="234" height="250" fill="url(#utv)"/></mask><clipPath id="uc"><path d="M59 -9 L62 50 L65 94 L70 130 L75 158 L95 163 L115 165 L127 157 L136 144 L149 118 L158 92 L164 50 L167 -9 Z"/></clipPath><filter id="ub" x="-10%" y="-10%" width="120%" height="120%"><feGaussianBlur stdDeviation="3"/></filter><clipPath id="ic"><rect width="234" height="233"/></clipPath></defs><g clip-path="url(#ic)"><rect width="234" height="233" fill="url(#hue)"/><rect width="234" height="233" fill="url(#sat)"/><g mask="url(#um)"><g filter="url(#ub)"><g clip-path="url(#uc)"><rect y="-10" width="234" height="190" fill="url(#uhue)"/><rect y="-10" width="234" height="190" fill="url(#udk)"/><rect y="-10" width="234" height="190" fill="url(#utl)" mask="url(#utm)"/></g></g></g></g></svg>
<div class="cb" style="left:552px;top:297px;width:12px;height:12px;"></div>
<span class="t" style="left:569.8px;top:296.1px;font-size:11px;line-height:15px;letter-spacing:-0.230px;color:#000;">Zoom</span>
<div class="frame" style="left:615px;top:289.5px;width:175.5px;height:27px;background:#808080;"></div>
<div class="btn" style="left:620.5px;top:293.5px;width:37px;height:17.5px;background:#f0f0f0;"><span class="t" style="left:13.1px;top:1.25px;font-size:11px;line-height:15px;letter-spacing:-0.864px;color:#000;">Inp</span></div>
<div class="btn" style="left:663.5px;top:293.5px;width:36.5px;height:17.5px;background:#f0f0f0;"><span class="t" style="left:9px;top:1.25px;font-size:11px;line-height:15px;letter-spacing:0.119px;color:#000;">I&gt;M</span></div>
<div class="btn" style="left:706px;top:293.5px;width:36.5px;height:17.5px;background:#f0f0f0;"><span class="t" style="left:7.3px;top:1.25px;font-size:11px;line-height:15px;letter-spacing:-0.287px;color:#000;">Outp</span></div>
<div class="btn" style="left:748.5px;top:293.5px;width:37.5px;height:17.5px;background:#ffffd6;"><span class="t" style="left:6.3px;top:1.25px;font-size:11px;line-height:15px;letter-spacing:0.452px;color:#000;font-weight:bold;">O&gt;M</span></div>
<div class="btn" style="left:552px;top:315px;width:46px;height:17.5px;background:#f0f0f0;"><span class="t" style="left:8.6px;top:1.25px;font-size:11px;line-height:15px;letter-spacing:0.097px;color:#000;">Z-Out</span></div>
<span class="t" style="left:629.3px;top:321.1px;font-size:11px;line-height:15px;letter-spacing:-0.277px;color:#000;">Black Pt. Comp.</span>
<div class="dd" style="left:709px;top:319px;width:76px;height:17px;background:#fff;"><span class="t" style="left:2.6px;top:1.3px;font-size:11px;line-height:15px;letter-spacing:-0.023px;color:#000;">Off</span><div class="ab" style="right:1px;top:1px;width:13.5px;height:13px"><svg width="9" height="6" viewBox="0 0 9 6" style="left:3.85px;top:5.1px"><path d="M0.6 0.6H8.2L4.4 5.1Z" fill="#000"/></svg></div></div>
<div class="frame" style="left:552px;top:340.3px;width:239.5px;height:26px;background:#808080;"></div>
<div class="dd" style="left:556px;top:343.5px;width:229.5px;height:17.5px;background:#fff;"><span class="t" style="left:2.3px;top:1.05px;font-size:12px;line-height:16px;letter-spacing:-0.200px;color:#000;font-weight:bold;">xy Chromaticity (Saturation map)</span><div class="ab" style="right:1px;top:1px;width:13.5px;height:13.5px"><svg width="9" height="6" viewBox="0 0 9 6" style="left:3.85px;top:5.35px"><path d="M0.6 0.6H8.2L4.4 5.1Z" fill="#000"/></svg></div></div>
<div class="frame" style="left:552px;top:368px;width:239.5px;height:128.5px;"></div>
<div class="btn dis" style="left:557.5px;top:374px;width:77px;height:20.5px;background:#f0f0f0;"><span class="t" style="left:11.2px;top:2.75px;font-size:11px;line-height:15px;letter-spacing:-0.170px;color:#a0a0a0;">Reset scale</span></div>
<div class="btn dis" style="left:641.5px;top:374px;width:74px;height:20.5px;background:#f0f0f0;"><span class="t" style="left:10px;top:2.75px;font-size:11px;line-height:15px;letter-spacing:-0.080px;color:#a0a0a0;">Reset view</span></div>
<div class="btn dis" style="left:722px;top:374px;width:64.5px;height:20.5px;background:#f0f0f0;"><span class="t" style="left:10.5px;top:2.75px;font-size:11px;line-height:15px;letter-spacing:0.150px;color:#a0a0a0;">Top view</span></div>
<div class="cb" style="left:557.3px;top:404px;width:12px;height:12px;"><svg width="10" height="10" viewBox="0 0 10 10" style="left:0;top:0"><path d="M1.5 4.5 L3.8 7 L8.2 2" fill="none" stroke="#000" stroke-width="2"/></svg></div>
<span class="t" style="left:575px;top:402.1px;font-size:11px;line-height:15px;letter-spacing:0.125px;color:#000;">Wavelth</span>
<div class="dd" style="left:626.2px;top:400.4px;width:160px;height:17.5px;background:#fff;"><span class="t" style="left:3px;top:1.55px;font-size:11px;line-height:15px;letter-spacing:-0.216px;color:#000;">Normal/gamut boundaries</span><div class="ab" style="right:1px;top:1px;width:13.5px;height:13.5px"><svg width="9" height="6" viewBox="0 0 9 6" style="left:3.85px;top:5.35px"><path d="M0.6 0.6H8.2L4.4 5.1Z" fill="#000"/></svg></div></div>
<div class="frame" style="left:552px;top:466.6px;width:87px;height:30px;"></div>
<div class="btn" style="left:557.3px;top:471.7px;width:75px;height:19px;background:#f0f0f0;"><span class="t" style="left:9.4px;top:1.5px;font-size:12px;line-height:16px;letter-spacing:-0.005px;color:#000;font-weight:bold;">Print Test</span></div>
<div class="frame" style="left:552px;top:495.5px;width:239.5px;height:31px;"></div>
<div class="sunk" style="left:557.3px;top:502.5px;width:229px;height:18.5px;"></div>
<span class="t" style="left:643.4px;top:504.1px;font-size:11px;line-height:15px;letter-spacing:-0.102px;color:#000;">not selected</span>
<div class="frame" style="left:558.2px;top:531px;width:142.5px;height:56px;"></div>
<span class="t" style="left:568.7px;top:536px;font-size:12px;line-height:16px;letter-spacing:-0.238px;color:#000;font-weight:bold;">Display A</span>
<div class="btn" style="left:649.4px;top:535.4px;width:45px;height:21px;background:#f0f0f0;"><span class="t" style="left:7.9px;top:2.5px;font-size:12px;line-height:16px;letter-spacing:0.043px;color:#000;font-weight:bold;">View</span></div>
<div class="dd" style="left:562.3px;top:561.3px;width:36.5px;height:17.5px;background:#fff;"><span class="t" style="left:3.2px;top:1.55px;font-size:11px;line-height:15px;letter-spacing:-0.818px;color:#000;">1</span><div class="ab" style="right:1px;top:1px;width:13.5px;height:13.5px"><svg width="9" height="6" viewBox="0 0 9 6" style="left:3.85px;top:5.35px"><path d="M0.6 0.6H8.2L4.4 5.1Z" fill="#000"/></svg></div></div>
<span class="t" style="left:610.4px;top:563.3px;font-size:11px;line-height:15px;letter-spacing:-0.200px;color:#000;">IN</span>
<span class="t" style="left:627.8px;top:563.3px;font-size:11px;line-height:15px;letter-spacing:-0.673px;color:#000;">OUT</span>
<div class="dd" style="left:658.8px;top:561.3px;width:35.5px;height:17.5px;background:#fff;"><span class="t" style="left:3.2px;top:1.55px;font-size:11px;line-height:15px;letter-spacing:-0.118px;color:#000;">3</span><div class="ab" style="right:1px;top:1px;width:13.5px;height:13.5px"><svg width="9" height="6" viewBox="0 0 9 6" style="left:3.85px;top:5.35px"><path d="M0.6 0.6H8.2L4.4 5.1Z" fill="#000"/></svg></div></div>
<div class="frame" style="left:558.2px;top:591px;width:142.5px;height:56px;"></div>
<span class="t" style="left:568.7px;top:596px;font-size:12px;line-height:16px;letter-spacing:-0.287px;color:#000;font-weight:bold;">Display B</span>
<div class="btn" style="left:649.4px;top:595.4px;width:45px;height:21px;background:#f0f0f0;"><span class="t" style="left:7.9px;top:2.5px;font-size:12px;line-height:16px;letter-spacing:0.043px;color:#000;font-weight:bold;">View</span></div>
<div class="dd" style="left:562.3px;top:621.3px;width:36.5px;height:17.5px;background:#fff;"><span class="t" style="left:3.2px;top:1.55px;font-size:11px;line-height:15px;letter-spacing:-0.818px;color:#000;">2</span><div class="ab" style="right:1px;top:1px;width:13.5px;height:13.5px"><svg width="9" height="6" viewBox="0 0 9 6" style="left:3.85px;top:5.35px"><path d="M0.6 0.6H8.2L4.4 5.1Z" fill="#000"/></svg></div></div>
<span class="t" style="left:610.4px;top:623.3px;font-size:11px;line-height:15px;letter-spacing:-0.200px;color:#000;">IN</span>
<span class="t" style="left:627.8px;top:623.3px;font-size:11px;line-height:15px;letter-spacing:-0.673px;color:#000;">OUT</span>
<div class="dd" style="left:658.8px;top:621.3px;width:35.5px;height:17.5px;background:#fff;"><span class="t" style="left:3.2px;top:1.55px;font-size:11px;line-height:15px;letter-spacing:-0.118px;color:#000;">4</span><div class="ab" style="right:1px;top:1px;width:13.5px;height:13.5px"><svg width="9" height="6" viewBox="0 0 9 6" style="left:3.85px;top:5.35px"><path d="M0.6 0.6H8.2L4.4 5.1Z" fill="#000"/></svg></div></div>
<div class="btn" style="left:719.4px;top:531.5px;width:67px;height:20px;background:#f0f0f0;"><span class="t" style="left:22.2px;top:2.5px;font-size:11px;line-height:15px;letter-spacing:-0.281px;color:#000;">Help</span></div>
<div class="btn" style="left:719.4px;top:563.5px;width:67px;height:20px;background:#f0f0f0;"><span class="t" style="left:25.2px;top:2.5px;font-size:11px;line-height:15px;letter-spacing:-0.434px;color:#000;">Exit</span></div>
<svg style="left:708px;top:595px" width="80" height="48" viewBox="0 0 80 48"><defs><linearGradient id="lg" x1="0" x2="1" y1="0" y2="0"><stop offset="0" stop-color="#0a4a14"/><stop offset=".5" stop-color="#0c6a18"/><stop offset="1" stop-color="#0e861e"/></linearGradient></defs><rect width="80" height="48" fill="#0c10b0"/><path d="M0 0 H80 V29.7 Z" fill="#fff"/><path d="M4 0 H80 V11.3 Z" fill="url(#lg)"/><path d="M1 0.3 L80 17 V23.1 L0.5 0.3 Z" fill="#d8400f"/><path d="M0.3 0.4 L80 25.6 V27.4 L0 0.5 Z" fill="#a020a0"/><path d="M4 8.4 C4.4 7 9 6.6 11 8 C18 12 25 16.5 31.3 20.3 L9.6 27.7 C6 23 3.2 15 4 8.4 Z" fill="#ffffc4"/><text x="2.6" y="44" font-family="Liberation Serif,serif" font-style="italic" font-size="17" fill="#fff" textLength="76" lengthAdjust="spacingAndGlyphs">Gamutvision</text></svg>
<span class="t" style="left:6.4px;top:576.3px;font-size:12px;line-height:16px;letter-spacing:-1.874px;color:#000;font-weight:bold;">1</span>
<span class="t" style="left:7.6px;top:628.5px;font-size:12px;line-height:16px;letter-spacing:-0.274px;color:#000;font-weight:bold;">2</span>
<span class="t" style="left:535px;top:576.3px;font-size:12px;line-height:16px;letter-spacing:-0.174px;color:#000;font-weight:bold;">3</span>
<span class="t" style="left:535px;top:628.5px;font-size:12px;line-height:16px;letter-spacing:0.126px;color:#000;font-weight:bold;">4</span>
<div class="dd" style="left:19px;top:574px;width:251px;height:18px;background:#ffffcc;"><span class="t" style="left:3.2px;top:1.8px;font-size:11px;line-height:15px;letter-spacing:-0.101px;color:#000;">AdobeRGB1998.icc</span><div class="ab" style="right:1px;top:1px;width:13.5px;height:14px"><svg width="9" height="6" viewBox="0 0 9 6" style="left:3.85px;top:5.6px"><path d="M0.6 0.6H8.2L4.4 5.1Z" fill="#000"/></svg></div></div>
<div class="dd" style="left:19px;top:626.5px;width:251px;height:18px;background:#e6ffe6;"><span class="t" style="left:3.5px;top:1.8px;font-size:11px;line-height:15px;letter-spacing:-0.294px;color:#000;">Mi monitor_AdobeRGB.icm</span><div class="ab" style="right:1px;top:1px;width:13.5px;height:14px"><svg width="9" height="6" viewBox="0 0 9 6" style="left:3.85px;top:5.6px"><path d="M0.6 0.6H8.2L4.4 5.1Z" fill="#000"/></svg></div></div>
<div class="dd" style="left:277px;top:574px;width:250.5px;height:18px;background:#f0f0f0;"><span class="t" style="left:3.8px;top:1.8px;font-size:11px;line-height:15px;letter-spacing:-0.350px;color:#000;">Browse...</span><div class="ab" style="right:1px;top:1px;width:13.5px;height:14px"><svg width="9" height="6" viewBox="0 0 9 6" style="left:3.85px;top:5.6px"><path d="M0.6 0.6H8.2L4.4 5.1Z" fill="#000"/></svg></div></div>
<div class="dd" style="left:277px;top:626.5px;width:250.5px;height:18px;background:#f0f0f0;"><span class="t" style="left:3.8px;top:1.8px;font-size:11px;line-height:15px;letter-spacing:-0.350px;color:#000;">Browse...</span><div class="ab" style="right:1px;top:1px;width:13.5px;height:14px"><svg width="9" height="6" viewBox="0 0 9 6" style="left:3.85px;top:5.6px"><path d="M0.6 0.6H8.2L4.4 5.1Z" fill="#000"/></svg></div></div>
<div style="left:19px;top:594.6px;width:223px;height:32px;background:#4c80cc;border:1px solid #2a3d66;border-width:0 1px 1px 1px;box-sizing:border-box;"></div>
<div class="btn dk" style="left:24px;top:600px;width:45px;height:21.5px;background:#ffffd6;"><span class="t" style="left:8.3px;top:2.75px;font-size:12px;line-height:16px;letter-spacing:-0.032px;color:#000;font-weight:bold;">View</span></div>
<div class="dd" style="left:94px;top:600px;width:139.5px;height:18.5px;background:#ffffee;"><span class="t" style="left:3.5px;top:2.05px;font-size:11px;line-height:15px;letter-spacing:-0.158px;color:#000;">None (or Print Test)</span><div class="ab" style="right:1px;top:1px;width:13.5px;height:14.5px"><svg width="9" height="6" viewBox="0 0 9 6" style="left:3.85px;top:5.85px"><path d="M0.6 0.6H8.2L4.4 5.1Z" fill="#000"/></svg></div></div>
<span class="t" style="left:249.7px;top:603.1px;font-size:11px;line-height:15px;letter-spacing:-0.207px;color:#000;">Rendering</span>
<div style="left:307px;top:595px;width:222px;height:31.3px;background:#808080;border-left:1px solid #333;border-right:1px solid #555;box-sizing:border-box;"></div>
<div class="dd" style="left:311.5px;top:600.5px;width:140px;height:18.5px;background:#f0f0f0;"><span class="t" style="left:3px;top:2.05px;font-size:11px;line-height:15px;letter-spacing:-0.251px;color:#000;">Absolute</span><div class="ab" style="right:1px;top:1px;width:13.5px;height:14.5px"><svg width="9" height="6" viewBox="0 0 9 6" style="left:3.85px;top:5.85px"><path d="M0.6 0.6H8.2L4.4 5.1Z" fill="#000"/></svg></div></div>
<div class="btn" style="left:478.8px;top:599.8px;width:44.7px;height:21.6px;background:#f0f0f0;"><span class="t" style="left:7.8px;top:2.8px;font-size:12px;line-height:16px;letter-spacing:0.068px;color:#000;font-weight:bold;">View</span></div>
<svg style="left:5.2px;top:596px" width="12" height="27.1" viewBox="0 0 12 27.1"><rect width="12" height="27.1" fill="#e4e4e4"/><path d="M4.4 1 H7.6 V20.1 H10.3 L6 26.5 L1.7 20.1 H4.4 Z" fill="#555"/></svg>
<svg style="left:532.3px;top:596px" width="12" height="27.1" viewBox="0 0 12 27.1"><rect width="12" height="27.1" fill="#e4e4e4"/><path d="M4.4 1 H7.6 V20.1 H10.3 L6 26.5 L1.7 20.1 H4.4 Z" fill="#555"/></svg>
</div></body></html>
